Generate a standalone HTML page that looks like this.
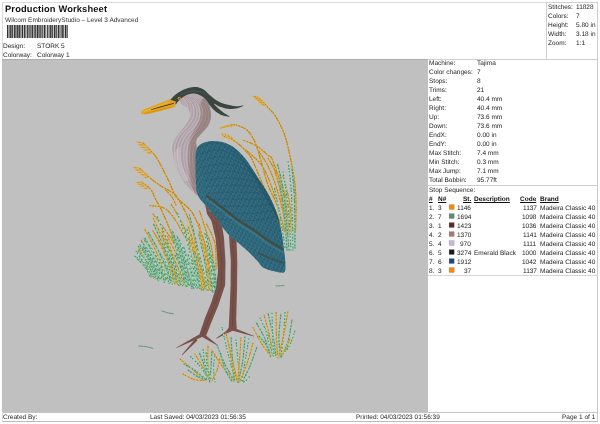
<!DOCTYPE html>
<html>
<head>
<meta charset="utf-8">
<title>Production Worksheet</title>
<style>
html,body{margin:0;padding:0;background:#fff;}
body{text-rendering:geometricPrecision;width:600px;height:424px;position:relative;overflow:hidden;font-family:"Liberation Sans",sans-serif;color:#222;font-size:6.5px;}
.abs{will-change:transform;position:absolute;white-space:nowrap;line-height:1;}
#frame{position:absolute;left:2px;top:2px;width:596px;height:420px;border:1px solid #dcdcdc;border-bottom-color:#bcbcbc;border-right-color:#cacaca;box-sizing:border-box;}
#title{left:4.6px;top:5px;font-size:9.3px;letter-spacing:0.16px;font-weight:bold;color:#111;}
#sub{left:4.6px;top:18px;font-size:6.5px;color:#333;}
#canvas{position:absolute;left:2px;top:59px;width:426px;height:353px;background:#c0c0c0;border-top:1px solid #adadad;box-sizing:border-box;overflow:hidden;}
#stats{position:absolute;left:546px;top:2px;width:52px;height:58px;border:1px solid #cfcfcf;box-sizing:border-box;}
.hl{position:absolute;height:1px;background:#cfcfcf;}
.t{will-change:transform;position:absolute;white-space:nowrap;line-height:8px;height:8px;font-size:6.5px;color:#222;}
.r{text-align:right;}
.b{font-weight:bold;text-decoration:underline;color:#111;}
.sw{position:absolute;width:5px;height:5px;box-sizing:border-box;}
.f{font-size:6.5px;color:#262626;}
#barcode{position:absolute;left:7.3px;top:25px;width:60.7px;height:13px;}

</style>
</head>
<body>
<div id="frame"></div>
<div id="title" class="abs">Production Worksheet</div>
<div id="sub" class="abs">Wilcom EmbroideryStudio – Level 3 Advanced</div>
<svg id="barcode" viewBox="0 0 60.7 13" preserveAspectRatio="none" fill="#303030"><rect x="0.00" y="0" width="1.20" height="13"/><rect x="1.70" y="0" width="0.90" height="13"/><rect x="3.15" y="0" width="1.50" height="13"/><rect x="5.15" y="0" width="0.90" height="13"/><rect x="6.75" y="0" width="1.20" height="13"/><rect x="8.35" y="0" width="1.20" height="13"/><rect x="10.10" y="0" width="1.50" height="13"/><rect x="12.00" y="0" width="0.90" height="13"/><rect x="13.45" y="0" width="0.90" height="13"/><rect x="14.85" y="0" width="1.20" height="13"/><rect x="16.75" y="0" width="1.20" height="13"/><rect x="18.45" y="0" width="0.90" height="13"/><rect x="20.05" y="0" width="0.90" height="13"/><rect x="21.45" y="0" width="1.20" height="13"/><rect x="23.35" y="0" width="1.20" height="13"/><rect x="25.05" y="0" width="1.20" height="13"/><rect x="26.80" y="0" width="0.90" height="13"/><rect x="28.20" y="0" width="0.90" height="13"/><rect x="29.65" y="0" width="1.50" height="13"/><rect x="31.50" y="0" width="1.20" height="13"/><rect x="33.25" y="0" width="1.20" height="13"/><rect x="34.85" y="0" width="0.90" height="13"/><rect x="36.65" y="0" width="1.50" height="13"/><rect x="38.55" y="0" width="0.70" height="13"/><rect x="40.15" y="0" width="1.20" height="13"/><rect x="41.85" y="0" width="0.70" height="13"/><rect x="43.10" y="0" width="1.50" height="13"/><rect x="44.95" y="0" width="0.90" height="13"/><rect x="46.75" y="0" width="1.50" height="13"/><rect x="48.60" y="0" width="1.20" height="13"/><rect x="50.70" y="0" width="1.50" height="13"/><rect x="52.60" y="0" width="0.90" height="13"/><rect x="54.40" y="0" width="1.50" height="13"/><rect x="56.30" y="0" width="0.90" height="13"/><rect x="57.90" y="0" width="1.50" height="13"/><rect x="59.75" y="0" width="0.95" height="13"/></svg>
<div id="canvas"><svg style="position:absolute;left:0;top:-1px" width="426" height="353" viewBox="2 59 426 353">
<path d="M142.5 142.5C143.4 143.4 145.8 145.7 148.0 148.0C150.2 150.3 153.4 153.3 155.7 156.5C158.0 159.7 159.5 162.9 161.8 167.2C164.1 171.5 167.2 177.7 169.5 182.5C171.8 187.3 173.0 192.6 175.6 196.3C178.2 200.1 182.2 202.2 185.0 205.0C187.8 207.8 190.2 209.3 192.5 213.0C194.8 216.7 196.7 220.8 199.0 227.0C201.3 233.2 204.6 241.2 206.6 250.0C208.6 258.8 210.3 275.0 211.0 280.0" fill="none" stroke="#e6ae38" stroke-width="1.3" stroke-linecap="round" />
<path d="M142.5 142.5C143.4 143.4 145.8 145.7 148.0 148.0C150.2 150.3 153.4 153.3 155.7 156.5C158.0 159.7 159.5 162.9 161.8 167.2C164.1 171.5 167.2 177.7 169.5 182.5C171.8 187.3 173.0 192.6 175.6 196.3C178.2 200.1 182.2 202.2 185.0 205.0C187.8 207.8 190.2 209.3 192.5 213.0C194.8 216.7 196.7 220.8 199.0 227.0C201.3 233.2 204.6 241.2 206.6 250.0C208.6 258.8 210.3 275.0 211.0 280.0" fill="none" stroke="#b8821e" stroke-width="1.1700000000000002" stroke-linecap="round" stroke-dasharray="0.8 1.9 1.3 1.5 0.6 2.5" stroke-dashoffset="1.6"/>
<path d="M142.9 142.9L136.8 142.2" fill="none" stroke="#e6ae38" stroke-width="1.25" stroke-linecap="round" />
<path d="M140.2 142.6L138.3 142.4" fill="none" stroke="#b8821e" stroke-width="0.9" stroke-linecap="round" opacity="0.7"/>
<path d="M145.5 145.5L138.4 144.6" fill="none" stroke="#e6ae38" stroke-width="1.25" stroke-linecap="round" />
<path d="M142.3 145.1L140.2 144.8" fill="none" stroke="#b8821e" stroke-width="0.9" stroke-linecap="round" opacity="0.7"/>
<path d="M148.0 148.0L140.6 147.1" fill="none" stroke="#e6ae38" stroke-width="1.25" stroke-linecap="round" />
<path d="M144.7 147.6L142.4 147.3" fill="none" stroke="#b8821e" stroke-width="0.9" stroke-linecap="round" opacity="0.7"/>
<path d="M150.4 150.7L143.3 149.8" fill="none" stroke="#e6ae38" stroke-width="1.25" stroke-linecap="round" />
<path d="M147.2 150.3L145.1 150.0" fill="none" stroke="#b8821e" stroke-width="0.9" stroke-linecap="round" opacity="0.7"/>
<path d="M152.8 153.4L146.7 152.6" fill="none" stroke="#e6ae38" stroke-width="1.25" stroke-linecap="round" />
<path d="M150.1 153.0L148.2 152.8" fill="none" stroke="#b8821e" stroke-width="0.9" stroke-linecap="round" opacity="0.7"/>
<path d="M138.5 167.5C139.3 168.2 141.3 169.9 143.4 171.8C145.5 173.7 148.2 176.4 151.0 178.7C153.8 181.0 157.0 183.4 160.3 185.6C163.6 187.8 167.9 189.4 171.0 191.7C174.1 194.0 175.4 193.8 178.7 199.4C182.0 205.0 187.9 216.6 191.0 225.0C194.1 233.4 195.0 240.5 197.0 250.0C199.0 259.5 202.0 276.7 203.0 282.0" fill="none" stroke="#e6ae38" stroke-width="1.3" stroke-linecap="round" />
<path d="M138.5 167.5C139.3 168.2 141.3 169.9 143.4 171.8C145.5 173.7 148.2 176.4 151.0 178.7C153.8 181.0 157.0 183.4 160.3 185.6C163.6 187.8 167.9 189.4 171.0 191.7C174.1 194.0 175.4 193.8 178.7 199.4C182.0 205.0 187.9 216.6 191.0 225.0C194.1 233.4 195.0 240.5 197.0 250.0C199.0 259.5 202.0 276.7 203.0 282.0" fill="none" stroke="#b8821e" stroke-width="1.1700000000000002" stroke-linecap="round" stroke-dasharray="0.8 1.9 1.3 1.5 0.6 2.5" stroke-dashoffset="0.8"/>
<path d="M139.0 167.9L133.2 167.6" fill="none" stroke="#e6ae38" stroke-width="1.25" stroke-linecap="round" />
<path d="M136.3 167.8L134.6 167.7" fill="none" stroke="#b8821e" stroke-width="0.9" stroke-linecap="round" opacity="0.7"/>
<path d="M141.7 170.3L135.0 169.9" fill="none" stroke="#e6ae38" stroke-width="1.25" stroke-linecap="round" />
<path d="M138.7 170.1L136.7 170.0" fill="none" stroke="#b8821e" stroke-width="0.9" stroke-linecap="round" opacity="0.7"/>
<path d="M144.3 172.7L137.4 172.3" fill="none" stroke="#e6ae38" stroke-width="1.25" stroke-linecap="round" />
<path d="M141.2 172.5L139.1 172.4" fill="none" stroke="#b8821e" stroke-width="0.9" stroke-linecap="round" opacity="0.7"/>
<path d="M147.0 175.1L140.4 174.7" fill="none" stroke="#e6ae38" stroke-width="1.25" stroke-linecap="round" />
<path d="M144.0 174.9L142.0 174.8" fill="none" stroke="#b8821e" stroke-width="0.9" stroke-linecap="round" opacity="0.7"/>
<path d="M149.7 177.5L143.9 177.2" fill="none" stroke="#e6ae38" stroke-width="1.25" stroke-linecap="round" />
<path d="M147.1 177.4L145.3 177.3" fill="none" stroke="#b8821e" stroke-width="0.9" stroke-linecap="round" opacity="0.7"/>
<path d="M141.0 182.0C141.9 182.6 144.7 184.1 146.5 185.6C148.3 187.1 150.3 188.7 151.8 191.0C153.3 193.3 154.3 196.7 155.7 199.4C157.1 202.1 157.9 202.7 160.0 207.0C162.1 211.3 165.0 217.8 168.0 225.0C171.0 232.2 174.7 240.8 178.0 250.0C181.3 259.2 186.3 275.0 188.0 280.0" fill="none" stroke="#e6ae38" stroke-width="1.3" stroke-linecap="round" />
<path d="M141.0 182.0C141.9 182.6 144.7 184.1 146.5 185.6C148.3 187.1 150.3 188.7 151.8 191.0C153.3 193.3 154.3 196.7 155.7 199.4C157.1 202.1 157.9 202.7 160.0 207.0C162.1 211.3 165.0 217.8 168.0 225.0C171.0 232.2 174.7 240.8 178.0 250.0C181.3 259.2 186.3 275.0 188.0 280.0" fill="none" stroke="#b8821e" stroke-width="1.1700000000000002" stroke-linecap="round" stroke-dasharray="0.8 1.9 1.3 1.5 0.6 2.5" stroke-dashoffset="3.3"/>
<path d="M141.5 182.3L136.0 182.6" fill="none" stroke="#e6ae38" stroke-width="1.25" stroke-linecap="round" />
<path d="M139.0 182.5L137.4 182.5" fill="none" stroke="#b8821e" stroke-width="0.9" stroke-linecap="round" opacity="0.7"/>
<path d="M144.2 184.1L137.8 184.4" fill="none" stroke="#e6ae38" stroke-width="1.25" stroke-linecap="round" />
<path d="M141.3 184.2L139.4 184.3" fill="none" stroke="#b8821e" stroke-width="0.9" stroke-linecap="round" opacity="0.7"/>
<path d="M146.8 185.9L140.4 186.2" fill="none" stroke="#e6ae38" stroke-width="1.25" stroke-linecap="round" />
<path d="M143.9 186.0L142.0 186.1" fill="none" stroke="#b8821e" stroke-width="0.9" stroke-linecap="round" opacity="0.7"/>
<path d="M149.0 188.2L143.6 188.5" fill="none" stroke="#e6ae38" stroke-width="1.25" stroke-linecap="round" />
<path d="M146.6 188.3L144.9 188.4" fill="none" stroke="#b8821e" stroke-width="0.9" stroke-linecap="round" opacity="0.7"/>
<path d="M150.0 205.6C152.3 206.0 160.0 205.9 164.0 208.0C168.0 210.1 170.5 213.2 174.0 218.0C177.5 222.8 181.9 231.7 185.0 237.0C188.1 242.3 190.0 242.2 192.5 250.0C195.0 257.8 198.8 278.3 200.0 284.0" fill="none" stroke="#e6ae38" stroke-width="1.2" stroke-linecap="round" />
<path d="M150.0 205.6C152.3 206.0 160.0 205.9 164.0 208.0C168.0 210.1 170.5 213.2 174.0 218.0C177.5 222.8 181.9 231.7 185.0 237.0C188.1 242.3 190.0 242.2 192.5 250.0C195.0 257.8 198.8 278.3 200.0 284.0" fill="none" stroke="#b8821e" stroke-width="1.08" stroke-linecap="round" stroke-dasharray="0.8 1.9 1.3 1.5 0.6 2.5" stroke-dashoffset="0.4"/>
<path d="M153.0 214.0C155.5 217.3 164.0 228.0 168.0 234.0C172.0 240.0 174.0 242.3 177.0 250.0C180.0 257.7 184.5 275.0 186.0 280.0" fill="none" stroke="#e6ae38" stroke-width="1.2" stroke-linecap="round" />
<path d="M153.0 214.0C155.5 217.3 164.0 228.0 168.0 234.0C172.0 240.0 174.0 242.3 177.0 250.0C180.0 257.7 184.5 275.0 186.0 280.0" fill="none" stroke="#b8821e" stroke-width="1.08" stroke-linecap="round" stroke-dasharray="0.8 1.9 1.3 1.5 0.6 2.5" stroke-dashoffset="2.7"/>
<path d="M171.0 204.0C173.2 207.8 180.8 219.3 184.0 227.0C187.2 234.7 187.7 240.5 190.0 250.0C192.3 259.5 196.7 278.3 198.0 284.0" fill="none" stroke="#e6ae38" stroke-width="1.2" stroke-linecap="round" />
<path d="M171.0 204.0C173.2 207.8 180.8 219.3 184.0 227.0C187.2 234.7 187.7 240.5 190.0 250.0C192.3 259.5 196.7 278.3 198.0 284.0" fill="none" stroke="#b8821e" stroke-width="1.08" stroke-linecap="round" stroke-dasharray="0.8 1.9 1.3 1.5 0.6 2.5" stroke-dashoffset="1.8"/>
<path d="M199.6 211.0C200.8 214.6 204.5 226.0 206.6 232.5C208.7 239.0 210.6 241.4 212.0 250.0C213.4 258.6 214.5 278.3 215.0 284.0" fill="none" stroke="#e6ae38" stroke-width="1.2" stroke-linecap="round" />
<path d="M199.6 211.0C200.8 214.6 204.5 226.0 206.6 232.5C208.7 239.0 210.6 241.4 212.0 250.0C213.4 258.6 214.5 278.3 215.0 284.0" fill="none" stroke="#b8821e" stroke-width="1.08" stroke-linecap="round" stroke-dasharray="0.8 1.9 1.3 1.5 0.6 2.5" stroke-dashoffset="0.3"/>
<path d="M206.6 224.0C208.0 227.3 213.4 236.3 215.0 244.0C216.6 251.7 215.8 265.7 216.0 270.0" fill="none" stroke="#e6ae38" stroke-width="1.2" stroke-linecap="round" />
<path d="M206.6 224.0C208.0 227.3 213.4 236.3 215.0 244.0C216.6 251.7 215.8 265.7 216.0 270.0" fill="none" stroke="#b8821e" stroke-width="1.08" stroke-linecap="round" stroke-dasharray="0.8 1.9 1.3 1.5 0.6 2.5" stroke-dashoffset="2.5"/>
<path d="M153.0 231.0C154.8 234.2 160.5 242.0 164.0 250.0C167.5 258.0 172.3 274.2 174.0 279.0" fill="none" stroke="#e6ae38" stroke-width="1.2" stroke-linecap="round" />
<path d="M153.0 231.0C154.8 234.2 160.5 242.0 164.0 250.0C167.5 258.0 172.3 274.2 174.0 279.0" fill="none" stroke="#b8821e" stroke-width="1.08" stroke-linecap="round" stroke-dasharray="0.8 1.9 1.3 1.5 0.6 2.5" stroke-dashoffset="0.2"/>
<path d="M165.6 190.0C166.7 191.2 170.3 194.5 172.0 197.0C173.7 199.5 175.3 203.7 176.0 205.0" fill="none" stroke="#e6ae38" stroke-width="1.2" stroke-linecap="round" />
<path d="M165.6 190.0C166.7 191.2 170.3 194.5 172.0 197.0C173.7 199.5 175.3 203.7 176.0 205.0" fill="none" stroke="#b8821e" stroke-width="1.08" stroke-linecap="round" stroke-dasharray="0.8 1.9 1.3 1.5 0.6 2.5" stroke-dashoffset="2.2"/>
<path d="M257.5 97.0C258.4 97.8 261.2 100.2 263.0 102.0C264.8 103.8 265.8 105.0 268.0 107.5C270.2 110.0 273.2 112.2 276.0 117.0C278.8 121.8 282.5 128.7 285.0 136.0C287.5 143.3 289.3 152.8 291.0 161.0C292.7 169.2 294.2 177.7 295.0 185.0C295.8 192.3 295.9 197.3 296.0 205.0C296.1 212.7 295.6 226.7 295.5 231.0" fill="none" stroke="#e6ae38" stroke-width="1.3" stroke-linecap="round" />
<path d="M257.5 97.0C258.4 97.8 261.2 100.2 263.0 102.0C264.8 103.8 265.8 105.0 268.0 107.5C270.2 110.0 273.2 112.2 276.0 117.0C278.8 121.8 282.5 128.7 285.0 136.0C287.5 143.3 289.3 152.8 291.0 161.0C292.7 169.2 294.2 177.7 295.0 185.0C295.8 192.3 295.9 197.3 296.0 205.0C296.1 212.7 295.6 226.7 295.5 231.0" fill="none" stroke="#b8821e" stroke-width="1.1700000000000002" stroke-linecap="round" stroke-dasharray="0.8 1.9 1.3 1.5 0.6 2.5" stroke-dashoffset="0.3"/>
<path d="M257.9 97.4L252.7 96.1" fill="none" stroke="#e6ae38" stroke-width="1.25" stroke-linecap="round" />
<path d="M255.6 96.8L254.0 96.4" fill="none" stroke="#b8821e" stroke-width="0.9" stroke-linecap="round" opacity="0.7"/>
<path d="M260.2 99.4L254.2 97.9" fill="none" stroke="#e6ae38" stroke-width="1.25" stroke-linecap="round" />
<path d="M257.5 98.7L255.7 98.3" fill="none" stroke="#b8821e" stroke-width="0.9" stroke-linecap="round" opacity="0.7"/>
<path d="M262.4 101.4L256.1 99.9" fill="none" stroke="#e6ae38" stroke-width="1.25" stroke-linecap="round" />
<path d="M259.5 100.7L257.7 100.3" fill="none" stroke="#b8821e" stroke-width="0.9" stroke-linecap="round" opacity="0.7"/>
<path d="M264.5 103.6L258.5 102.1" fill="none" stroke="#e6ae38" stroke-width="1.25" stroke-linecap="round" />
<path d="M261.8 102.9L260.0 102.5" fill="none" stroke="#b8821e" stroke-width="0.9" stroke-linecap="round" opacity="0.7"/>
<path d="M266.5 105.8L261.3 104.5" fill="none" stroke="#e6ae38" stroke-width="1.25" stroke-linecap="round" />
<path d="M264.1 105.2L262.6 104.8" fill="none" stroke="#b8821e" stroke-width="0.9" stroke-linecap="round" opacity="0.7"/>
<path d="M223.0 127.2C224.2 126.9 227.8 125.7 230.0 125.3C232.2 124.9 233.4 124.2 236.2 125.0C239.0 125.8 244.0 127.7 246.8 129.9C249.6 132.1 251.4 135.2 253.2 138.4C255.0 141.6 256.3 145.5 257.5 149.0C258.7 152.5 258.9 153.6 260.6 159.6C262.4 165.6 265.3 177.4 268.0 185.0C270.7 192.6 274.2 197.2 277.0 205.0C279.8 212.8 283.7 227.5 285.0 232.0" fill="none" stroke="#e6ae38" stroke-width="1.3" stroke-linecap="round" />
<path d="M223.0 127.2C224.2 126.9 227.8 125.7 230.0 125.3C232.2 124.9 233.4 124.2 236.2 125.0C239.0 125.8 244.0 127.7 246.8 129.9C249.6 132.1 251.4 135.2 253.2 138.4C255.0 141.6 256.3 145.5 257.5 149.0C258.7 152.5 258.9 153.6 260.6 159.6C262.4 165.6 265.3 177.4 268.0 185.0C270.7 192.6 274.2 197.2 277.0 205.0C279.8 212.8 283.7 227.5 285.0 232.0" fill="none" stroke="#b8821e" stroke-width="1.1700000000000002" stroke-linecap="round" stroke-dasharray="0.8 1.9 1.3 1.5 0.6 2.5" stroke-dashoffset="0.5"/>
<path d="M223.6 127.0L220.0 128.3" fill="none" stroke="#e6ae38" stroke-width="1.25" stroke-linecap="round" />
<path d="M222.0 127.6L220.9 128.0" fill="none" stroke="#b8821e" stroke-width="0.9" stroke-linecap="round" opacity="0.7"/>
<path d="M226.9 126.2L222.7 127.6" fill="none" stroke="#e6ae38" stroke-width="1.25" stroke-linecap="round" />
<path d="M225.0 126.8L223.7 127.2" fill="none" stroke="#b8821e" stroke-width="0.9" stroke-linecap="round" opacity="0.7"/>
<path d="M230.1 125.3L226.0 126.8" fill="none" stroke="#e6ae38" stroke-width="1.25" stroke-linecap="round" />
<path d="M228.3 125.9L227.0 126.4" fill="none" stroke="#b8821e" stroke-width="0.9" stroke-linecap="round" opacity="0.7"/>
<path d="M233.5 125.1L230.0 126.4" fill="none" stroke="#e6ae38" stroke-width="1.25" stroke-linecap="round" />
<path d="M231.9 125.7L230.8 126.1" fill="none" stroke="#b8821e" stroke-width="0.9" stroke-linecap="round" opacity="0.7"/>
<path d="M223.0 136.2C224.3 136.6 228.3 137.5 231.0 138.9C233.7 140.3 236.8 142.5 239.4 144.7C242.0 146.9 244.7 149.7 246.8 152.2C248.9 154.7 249.5 154.1 252.2 159.6C254.9 165.1 259.5 177.4 263.0 185.0C266.5 192.6 269.7 197.5 273.0 205.0C276.3 212.5 281.3 225.8 283.0 230.0" fill="none" stroke="#e6ae38" stroke-width="1.3" stroke-linecap="round" />
<path d="M223.0 136.2C224.3 136.6 228.3 137.5 231.0 138.9C233.7 140.3 236.8 142.5 239.4 144.7C242.0 146.9 244.7 149.7 246.8 152.2C248.9 154.7 249.5 154.1 252.2 159.6C254.9 165.1 259.5 177.4 263.0 185.0C266.5 192.6 269.7 197.5 273.0 205.0C276.3 212.5 281.3 225.8 283.0 230.0" fill="none" stroke="#b8821e" stroke-width="1.1700000000000002" stroke-linecap="round" stroke-dasharray="0.8 1.9 1.3 1.5 0.6 2.5" stroke-dashoffset="2.1"/>
<path d="M223.6 136.4L221.9 133.0" fill="none" stroke="#e6ae38" stroke-width="1.25" stroke-linecap="round" />
<path d="M222.8 134.9L222.3 133.8" fill="none" stroke="#b8821e" stroke-width="0.9" stroke-linecap="round" opacity="0.7"/>
<path d="M226.8 137.5L224.8 133.5" fill="none" stroke="#e6ae38" stroke-width="1.25" stroke-linecap="round" />
<path d="M225.9 135.7L225.3 134.5" fill="none" stroke="#b8821e" stroke-width="0.9" stroke-linecap="round" opacity="0.7"/>
<path d="M230.0 138.6L228.0 134.6" fill="none" stroke="#e6ae38" stroke-width="1.25" stroke-linecap="round" />
<path d="M229.1 136.8L228.5 135.6" fill="none" stroke="#b8821e" stroke-width="0.9" stroke-linecap="round" opacity="0.7"/>
<path d="M232.9 140.2L231.2 136.8" fill="none" stroke="#e6ae38" stroke-width="1.25" stroke-linecap="round" />
<path d="M232.2 138.7L231.7 137.7" fill="none" stroke="#b8821e" stroke-width="0.9" stroke-linecap="round" opacity="0.7"/>
<path d="M242.6 140.0C244.2 140.6 249.4 142.4 252.2 143.7C255.0 145.0 257.0 146.0 259.6 147.9C262.2 149.8 265.9 153.4 268.0 155.3C270.1 157.2 270.1 154.7 272.3 159.6C274.5 164.5 278.6 176.6 281.0 185.0C283.4 193.4 285.7 202.2 287.0 210.0C288.3 217.8 288.7 228.3 289.0 232.0" fill="none" stroke="#e6ae38" stroke-width="1.2" stroke-linecap="round" />
<path d="M242.6 140.0C244.2 140.6 249.4 142.4 252.2 143.7C255.0 145.0 257.0 146.0 259.6 147.9C262.2 149.8 265.9 153.4 268.0 155.3C270.1 157.2 270.1 154.7 272.3 159.6C274.5 164.5 278.6 176.6 281.0 185.0C283.4 193.4 285.7 202.2 287.0 210.0C288.3 217.8 288.7 228.3 289.0 232.0" fill="none" stroke="#b8821e" stroke-width="1.08" stroke-linecap="round" stroke-dasharray="0.8 1.9 1.3 1.5 0.6 2.5" stroke-dashoffset="4.1"/>
<path d="M246.0 150.0C248.6 152.5 257.3 159.2 261.5 165.0C265.7 170.8 268.1 177.5 271.0 185.0C273.9 192.5 277.0 202.2 279.0 210.0C281.0 217.8 282.3 228.3 283.0 232.0" fill="none" stroke="#e6ae38" stroke-width="1.2" stroke-linecap="round" />
<path d="M246.0 150.0C248.6 152.5 257.3 159.2 261.5 165.0C265.7 170.8 268.1 177.5 271.0 185.0C273.9 192.5 277.0 202.2 279.0 210.0C281.0 217.8 282.3 228.3 283.0 232.0" fill="none" stroke="#b8821e" stroke-width="1.08" stroke-linecap="round" stroke-dasharray="0.8 1.9 1.3 1.5 0.6 2.5" stroke-dashoffset="0.6"/>
<path d="M258.0 150.0C259.7 152.7 265.0 160.0 268.0 166.0C271.0 172.0 273.5 178.3 276.0 186.0C278.5 193.7 281.2 204.2 283.0 212.0C284.8 219.8 286.3 229.5 287.0 233.0" fill="none" stroke="#e6ae38" stroke-width="1.2" stroke-linecap="round" />
<path d="M258.0 150.0C259.7 152.7 265.0 160.0 268.0 166.0C271.0 172.0 273.5 178.3 276.0 186.0C278.5 193.7 281.2 204.2 283.0 212.0C284.8 219.8 286.3 229.5 287.0 233.0" fill="none" stroke="#b8821e" stroke-width="1.08" stroke-linecap="round" stroke-dasharray="0.8 1.9 1.3 1.5 0.6 2.5" stroke-dashoffset="1.1"/>
<path d="M272.7 165.0C273.9 169.2 277.8 178.8 280.0 190.0C282.2 201.2 285.0 225.0 286.0 232.0" fill="none" stroke="#e6ae38" stroke-width="1.2" stroke-linecap="round" />
<path d="M272.7 165.0C273.9 169.2 277.8 178.8 280.0 190.0C282.2 201.2 285.0 225.0 286.0 232.0" fill="none" stroke="#b8821e" stroke-width="1.08" stroke-linecap="round" stroke-dasharray="0.8 1.9 1.3 1.5 0.6 2.5" stroke-dashoffset="3.1"/>
<path d="M268.0 158.0C270.0 161.7 276.7 172.2 280.0 180.0C283.3 187.8 286.2 196.3 288.0 205.0C289.8 213.7 290.5 227.5 291.0 232.0" fill="none" stroke="#e6ae38" stroke-width="1.2" stroke-linecap="round" />
<path d="M268.0 158.0C270.0 161.7 276.7 172.2 280.0 180.0C283.3 187.8 286.2 196.3 288.0 205.0C289.8 213.7 290.5 227.5 291.0 232.0" fill="none" stroke="#b8821e" stroke-width="1.08" stroke-linecap="round" stroke-dasharray="0.8 1.9 1.3 1.5 0.6 2.5" stroke-dashoffset="4.7"/>
<path d="M283.0 176.0C284.0 180.0 287.3 190.7 289.0 200.0C290.7 209.3 292.3 226.7 293.0 232.0" fill="none" stroke="#e6ae38" stroke-width="1.2" stroke-linecap="round" />
<path d="M283.0 176.0C284.0 180.0 287.3 190.7 289.0 200.0C290.7 209.3 292.3 226.7 293.0 232.0" fill="none" stroke="#b8821e" stroke-width="1.08" stroke-linecap="round" stroke-dasharray="0.8 1.9 1.3 1.5 0.6 2.5" stroke-dashoffset="2.9"/>
<path d="M277.5 164.0C278.6 169.2 282.1 180.7 284.0 195.0C285.9 209.3 288.2 240.8 289.0 250.0" fill="none" stroke="#92c6a6" stroke-width="1.4" stroke-linecap="round" />
<path d="M277.5 164.0C278.6 169.2 282.1 180.7 284.0 195.0C285.9 209.3 288.2 240.8 289.0 250.0" fill="none" stroke="#4f9070" stroke-width="1.26" stroke-linecap="round" stroke-dasharray="0.7 2.4 1.1 1.9 0.6 3.1" stroke-dashoffset="2.0"/>
<path d="M288.0 160.6C288.6 166.3 290.7 180.1 291.5 195.0C292.3 209.9 292.8 240.8 293.0 250.0" fill="none" stroke="#acdcc0" stroke-width="1.4" stroke-linecap="round" />
<path d="M288.0 160.6C288.6 166.3 290.7 180.1 291.5 195.0C292.3 209.9 292.8 240.8 293.0 250.0" fill="none" stroke="#4f9070" stroke-width="1.26" stroke-linecap="round" stroke-dasharray="0.7 2.4 1.1 1.9 0.6 3.1" stroke-dashoffset="4.9"/>
<path d="M283.0 172.0C283.8 177.5 286.7 192.0 288.0 205.0C289.3 218.0 290.5 242.5 291.0 250.0" fill="none" stroke="#acdcc0" stroke-width="1.4" stroke-linecap="round" />
<path d="M283.0 172.0C283.8 177.5 286.7 192.0 288.0 205.0C289.3 218.0 290.5 242.5 291.0 250.0" fill="none" stroke="#4f9070" stroke-width="1.26" stroke-linecap="round" stroke-dasharray="0.7 2.4 1.1 1.9 0.6 3.1" stroke-dashoffset="0.2"/>
<path d="M279.0 180.0C279.8 185.0 282.7 198.3 284.0 210.0C285.3 221.7 286.5 243.3 287.0 250.0" fill="none" stroke="#92c6a6" stroke-width="1.4" stroke-linecap="round" />
<path d="M279.0 180.0C279.8 185.0 282.7 198.3 284.0 210.0C285.3 221.7 286.5 243.3 287.0 250.0" fill="none" stroke="#4f9070" stroke-width="1.26" stroke-linecap="round" stroke-dasharray="0.7 2.4 1.1 1.9 0.6 3.1" stroke-dashoffset="4.3"/>
<path d="M292.0 168.0C292.4 173.3 294.0 186.7 294.5 200.0C295.0 213.3 294.9 240.0 295.0 248.0" fill="none" stroke="#92c6a6" stroke-width="1.4" stroke-linecap="round" />
<path d="M292.0 168.0C292.4 173.3 294.0 186.7 294.5 200.0C295.0 213.3 294.9 240.0 295.0 248.0" fill="none" stroke="#4f9070" stroke-width="1.26" stroke-linecap="round" stroke-dasharray="0.7 2.4 1.1 1.9 0.6 3.1" stroke-dashoffset="1.4"/>
<path d="M274.0 186.0C275.0 190.8 278.2 204.7 280.0 215.0C281.8 225.3 284.2 242.5 285.0 248.0" fill="none" stroke="#acdcc0" stroke-width="1.4" stroke-linecap="round" />
<path d="M274.0 186.0C275.0 190.8 278.2 204.7 280.0 215.0C281.8 225.3 284.2 242.5 285.0 248.0" fill="none" stroke="#4f9070" stroke-width="1.26" stroke-linecap="round" stroke-dasharray="0.7 2.4 1.1 1.9 0.6 3.1" stroke-dashoffset="0.7"/>
<path d="M167.5 236.4C169.4 240.4 175.6 252.4 178.9 260.5C182.3 268.6 186.2 281.0 187.7 285.0" fill="none" stroke="#e6ae38" stroke-width="1.15" stroke-linecap="round" />
<path d="M167.5 236.4C169.4 240.4 175.6 252.4 178.9 260.5C182.3 268.6 186.2 281.0 187.7 285.0" fill="none" stroke="#b8821e" stroke-width="1.035" stroke-linecap="round" stroke-dasharray="0.9 3.0 1.4 2.4 0.7 3.9" stroke-dashoffset="4.5"/>
<path d="M160.3 259.6C161.5 261.5 165.5 266.9 167.3 270.8C169.0 274.6 170.2 280.7 170.8 282.7" fill="none" stroke="#acdcc0" stroke-width="1.35" stroke-linecap="round" />
<path d="M160.3 259.6C161.5 261.5 165.5 266.9 167.3 270.8C169.0 274.6 170.2 280.7 170.8 282.7" fill="none" stroke="#4f9070" stroke-width="1.215" stroke-linecap="round" stroke-dasharray="0.9 3.0 1.4 2.4 0.7 3.9" stroke-dashoffset="4.4"/>
<path d="M185.5 231.4C187.2 236.2 192.6 250.6 195.6 260.4C198.5 270.3 201.9 285.4 203.2 290.4" fill="none" stroke="#acdcc0" stroke-width="1.35" stroke-linecap="round" />
<path d="M185.5 231.4C187.2 236.2 192.6 250.6 195.6 260.4C198.5 270.3 201.9 285.4 203.2 290.4" fill="none" stroke="#4f9070" stroke-width="1.215" stroke-linecap="round" stroke-dasharray="0.9 3.0 1.4 2.4 0.7 3.9" stroke-dashoffset="4.5"/>
<path d="M143.9 249.0C145.7 251.5 151.3 258.9 154.6 264.1C157.9 269.4 162.1 277.8 163.6 280.5" fill="none" stroke="#92c6a6" stroke-width="1.35" stroke-linecap="round" />
<path d="M143.9 249.0C145.7 251.5 151.3 258.9 154.6 264.1C157.9 269.4 162.1 277.8 163.6 280.5" fill="none" stroke="#4f9070" stroke-width="1.215" stroke-linecap="round" stroke-dasharray="0.9 3.0 1.4 2.4 0.7 3.9" stroke-dashoffset="2.3"/>
<path d="M171.7 229.3C173.6 234.1 179.7 248.5 183.2 258.1C186.7 267.8 191.2 282.4 192.8 287.2" fill="none" stroke="#92c6a6" stroke-width="1.35" stroke-linecap="round" />
<path d="M171.7 229.3C173.6 234.1 179.7 248.5 183.2 258.1C186.7 267.8 191.2 282.4 192.8 287.2" fill="none" stroke="#4f9070" stroke-width="1.215" stroke-linecap="round" stroke-dasharray="0.9 3.0 1.4 2.4 0.7 3.9" stroke-dashoffset="1.2"/>
<path d="M188.1 225.3C189.4 230.5 193.8 245.8 195.9 256.4C197.9 267.0 199.7 283.4 200.5 288.9" fill="none" stroke="#e6ae38" stroke-width="1.15" stroke-linecap="round" />
<path d="M188.1 225.3C189.4 230.5 193.8 245.8 195.9 256.4C197.9 267.0 199.7 283.4 200.5 288.9" fill="none" stroke="#b8821e" stroke-width="1.035" stroke-linecap="round" stroke-dasharray="0.9 3.0 1.4 2.4 0.7 3.9" stroke-dashoffset="2.1"/>
<path d="M140.5 253.0C141.9 255.0 146.5 260.9 148.7 265.1C150.9 269.2 152.8 275.8 153.6 277.9" fill="none" stroke="#acdcc0" stroke-width="1.35" stroke-linecap="round" />
<path d="M140.5 253.0C141.9 255.0 146.5 260.9 148.7 265.1C150.9 269.2 152.8 275.8 153.6 277.9" fill="none" stroke="#4f9070" stroke-width="1.215" stroke-linecap="round" stroke-dasharray="0.9 3.0 1.4 2.4 0.7 3.9" stroke-dashoffset="4.4"/>
<path d="M156.5 215.0C158.8 220.7 166.4 237.6 170.6 249.2C174.8 260.7 179.8 278.5 181.7 284.3" fill="none" stroke="#acdcc0" stroke-width="1.35" stroke-linecap="round" />
<path d="M156.5 215.0C158.8 220.7 166.4 237.6 170.6 249.2C174.8 260.7 179.8 278.5 181.7 284.3" fill="none" stroke="#4f9070" stroke-width="1.215" stroke-linecap="round" stroke-dasharray="0.9 3.0 1.4 2.4 0.7 3.9" stroke-dashoffset="2.1"/>
<path d="M206.5 235.0C207.5 239.6 210.9 253.0 212.4 262.4C214.0 271.8 215.4 286.6 215.9 291.4" fill="none" stroke="#92c6a6" stroke-width="1.35" stroke-linecap="round" />
<path d="M206.5 235.0C207.5 239.6 210.9 253.0 212.4 262.4C214.0 271.8 215.4 286.6 215.9 291.4" fill="none" stroke="#4f9070" stroke-width="1.215" stroke-linecap="round" stroke-dasharray="0.9 3.0 1.4 2.4 0.7 3.9" stroke-dashoffset="3.9"/>
<path d="M189.4 214.9C191.0 221.1 196.0 239.4 198.6 251.8C201.1 264.1 203.8 282.7 204.8 288.9" fill="none" stroke="#92c6a6" stroke-width="1.35" stroke-linecap="round" />
<path d="M189.4 214.9C191.0 221.1 196.0 239.4 198.6 251.8C201.1 264.1 203.8 282.7 204.8 288.9" fill="none" stroke="#4f9070" stroke-width="1.215" stroke-linecap="round" stroke-dasharray="0.9 3.0 1.4 2.4 0.7 3.9" stroke-dashoffset="0.7"/>
<path d="M143.2 264.8C143.9 265.6 146.3 268.0 147.4 270.0C148.5 271.9 149.6 275.6 150.0 276.7" fill="none" stroke="#e6ae38" stroke-width="1.15" stroke-linecap="round" />
<path d="M143.2 264.8C143.9 265.6 146.3 268.0 147.4 270.0C148.5 271.9 149.6 275.6 150.0 276.7" fill="none" stroke="#b8821e" stroke-width="1.035" stroke-linecap="round" stroke-dasharray="0.9 3.0 1.4 2.4 0.7 3.9" stroke-dashoffset="4.5"/>
<path d="M174.0 260.8C175.1 262.7 178.7 268.1 180.3 272.1C181.9 276.2 183.1 282.9 183.6 285.1" fill="none" stroke="#acdcc0" stroke-width="1.35" stroke-linecap="round" />
<path d="M174.0 260.8C175.1 262.7 178.7 268.1 180.3 272.1C181.9 276.2 183.1 282.9 183.6 285.1" fill="none" stroke="#4f9070" stroke-width="1.215" stroke-linecap="round" stroke-dasharray="0.9 3.0 1.4 2.4 0.7 3.9" stroke-dashoffset="4.1"/>
<path d="M174.3 243.5C175.7 246.8 180.3 256.5 182.8 263.5C185.3 270.5 188.2 281.8 189.3 285.5" fill="none" stroke="#acdcc0" stroke-width="1.35" stroke-linecap="round" />
<path d="M174.3 243.5C175.7 246.8 180.3 256.5 182.8 263.5C185.3 270.5 188.2 281.8 189.3 285.5" fill="none" stroke="#4f9070" stroke-width="1.215" stroke-linecap="round" stroke-dasharray="0.9 3.0 1.4 2.4 0.7 3.9" stroke-dashoffset="0.7"/>
<path d="M161.8 235.2C163.7 239.1 169.9 250.4 173.0 258.6C176.1 266.9 179.1 280.4 180.3 284.7" fill="none" stroke="#92c6a6" stroke-width="1.35" stroke-linecap="round" />
<path d="M161.8 235.2C163.7 239.1 169.9 250.4 173.0 258.6C176.1 266.9 179.1 280.4 180.3 284.7" fill="none" stroke="#4f9070" stroke-width="1.215" stroke-linecap="round" stroke-dasharray="0.9 3.0 1.4 2.4 0.7 3.9" stroke-dashoffset="3.7"/>
<path d="M183.6 246.9C184.6 250.3 187.9 260.4 189.6 267.4C191.4 274.4 193.3 285.5 194.0 289.1" fill="none" stroke="#92c6a6" stroke-width="1.35" stroke-linecap="round" />
<path d="M183.6 246.9C184.6 250.3 187.9 260.4 189.6 267.4C191.4 274.4 193.3 285.5 194.0 289.1" fill="none" stroke="#4f9070" stroke-width="1.215" stroke-linecap="round" stroke-dasharray="0.9 3.0 1.4 2.4 0.7 3.9" stroke-dashoffset="3.1"/>
<path d="M161.7 230.3C163.7 235.0 170.2 249.1 174.1 258.6C178.1 268.0 183.4 282.3 185.2 287.1" fill="none" stroke="#e6ae38" stroke-width="1.15" stroke-linecap="round" />
<path d="M161.7 230.3C163.7 235.0 170.2 249.1 174.1 258.6C178.1 268.0 183.4 282.3 185.2 287.1" fill="none" stroke="#b8821e" stroke-width="1.035" stroke-linecap="round" stroke-dasharray="0.9 3.0 1.4 2.4 0.7 3.9" stroke-dashoffset="2.6"/>
<path d="M139.9 244.7C141.6 247.5 147.1 255.4 150.2 261.4C153.2 267.4 156.9 277.5 158.2 280.8" fill="none" stroke="#acdcc0" stroke-width="1.35" stroke-linecap="round" />
<path d="M139.9 244.7C141.6 247.5 147.1 255.4 150.2 261.4C153.2 267.4 156.9 277.5 158.2 280.8" fill="none" stroke="#4f9070" stroke-width="1.215" stroke-linecap="round" stroke-dasharray="0.9 3.0 1.4 2.4 0.7 3.9" stroke-dashoffset="0.3"/>
<path d="M186.8 228.2C188.2 233.4 192.6 248.8 195.0 259.1C197.5 269.4 200.6 284.9 201.7 290.1" fill="none" stroke="#acdcc0" stroke-width="1.35" stroke-linecap="round" />
<path d="M186.8 228.2C188.2 233.4 192.6 248.8 195.0 259.1C197.5 269.4 200.6 284.9 201.7 290.1" fill="none" stroke="#4f9070" stroke-width="1.215" stroke-linecap="round" stroke-dasharray="0.9 3.0 1.4 2.4 0.7 3.9" stroke-dashoffset="2.9"/>
<path d="M143.1 237.9C145.5 241.6 153.1 252.1 157.4 259.7C161.7 267.2 167.1 279.4 169.0 283.3" fill="none" stroke="#92c6a6" stroke-width="1.35" stroke-linecap="round" />
<path d="M143.1 237.9C145.5 241.6 153.1 252.1 157.4 259.7C161.7 267.2 167.1 279.4 169.0 283.3" fill="none" stroke="#4f9070" stroke-width="1.215" stroke-linecap="round" stroke-dasharray="0.9 3.0 1.4 2.4 0.7 3.9" stroke-dashoffset="0.9"/>
<path d="M198.4 231.9C199.4 236.7 202.7 250.5 204.5 260.2C206.3 270.0 208.2 285.5 209.0 290.5" fill="none" stroke="#92c6a6" stroke-width="1.35" stroke-linecap="round" />
<path d="M198.4 231.9C199.4 236.7 202.7 250.5 204.5 260.2C206.3 270.0 208.2 285.5 209.0 290.5" fill="none" stroke="#4f9070" stroke-width="1.215" stroke-linecap="round" stroke-dasharray="0.9 3.0 1.4 2.4 0.7 3.9" stroke-dashoffset="1.0"/>
<path d="M153.3 218.2C155.7 223.6 163.1 239.2 167.5 250.2C171.9 261.3 177.5 278.9 179.5 284.6" fill="none" stroke="#e6ae38" stroke-width="1.15" stroke-linecap="round" />
<path d="M153.3 218.2C155.7 223.6 163.1 239.2 167.5 250.2C171.9 261.3 177.5 278.9 179.5 284.6" fill="none" stroke="#b8821e" stroke-width="1.035" stroke-linecap="round" stroke-dasharray="0.9 3.0 1.4 2.4 0.7 3.9" stroke-dashoffset="4.6"/>
<path d="M176.8 251.0C177.9 253.9 181.5 262.1 183.2 268.2C185.0 274.3 186.5 284.3 187.2 287.5" fill="none" stroke="#acdcc0" stroke-width="1.35" stroke-linecap="round" />
<path d="M176.8 251.0C177.9 253.9 181.5 262.1 183.2 268.2C185.0 274.3 186.5 284.3 187.2 287.5" fill="none" stroke="#4f9070" stroke-width="1.215" stroke-linecap="round" stroke-dasharray="0.9 3.0 1.4 2.4 0.7 3.9" stroke-dashoffset="0.7"/>
<path d="M193.7 263.6C194.2 265.6 195.9 271.5 196.8 275.5C197.7 279.6 198.5 285.8 198.8 287.9" fill="none" stroke="#acdcc0" stroke-width="1.35" stroke-linecap="round" />
<path d="M193.7 263.6C194.2 265.6 195.9 271.5 196.8 275.5C197.7 279.6 198.5 285.8 198.8 287.9" fill="none" stroke="#4f9070" stroke-width="1.215" stroke-linecap="round" stroke-dasharray="0.9 3.0 1.4 2.4 0.7 3.9" stroke-dashoffset="0.6"/>
<path d="M176.8 235.3C178.2 239.6 182.8 252.2 185.3 261.1C187.9 269.9 190.8 283.9 191.9 288.5" fill="none" stroke="#92c6a6" stroke-width="1.35" stroke-linecap="round" />
<path d="M176.8 235.3C178.2 239.6 182.8 252.2 185.3 261.1C187.9 269.9 190.8 283.9 191.9 288.5" fill="none" stroke="#4f9070" stroke-width="1.215" stroke-linecap="round" stroke-dasharray="0.9 3.0 1.4 2.4 0.7 3.9" stroke-dashoffset="1.8"/>
<path d="M171.8 236.4C173.8 240.4 180.3 251.9 183.6 260.3C186.9 268.7 190.1 282.2 191.4 286.6" fill="none" stroke="#92c6a6" stroke-width="1.35" stroke-linecap="round" />
<path d="M171.8 236.4C173.8 240.4 180.3 251.9 183.6 260.3C186.9 268.7 190.1 282.2 191.4 286.6" fill="none" stroke="#4f9070" stroke-width="1.215" stroke-linecap="round" stroke-dasharray="0.9 3.0 1.4 2.4 0.7 3.9" stroke-dashoffset="3.1"/>
<path d="M189.2 238.4C190.6 242.4 195.1 254.4 197.2 262.7C199.4 271.0 201.4 283.9 202.2 288.1" fill="none" stroke="#e6ae38" stroke-width="1.15" stroke-linecap="round" />
<path d="M189.2 238.4C190.6 242.4 195.1 254.4 197.2 262.7C199.4 271.0 201.4 283.9 202.2 288.1" fill="none" stroke="#b8821e" stroke-width="1.035" stroke-linecap="round" stroke-dasharray="0.9 3.0 1.4 2.4 0.7 3.9" stroke-dashoffset="2.6"/>
<path d="M165.2 251.0C166.5 253.8 171.1 262.2 173.4 268.0C175.7 273.7 178.0 282.6 178.9 285.6" fill="none" stroke="#acdcc0" stroke-width="1.35" stroke-linecap="round" />
<path d="M165.2 251.0C166.5 253.8 171.1 262.2 173.4 268.0C175.7 273.7 178.0 282.6 178.9 285.6" fill="none" stroke="#4f9070" stroke-width="1.215" stroke-linecap="round" stroke-dasharray="0.9 3.0 1.4 2.4 0.7 3.9" stroke-dashoffset="4.4"/>
<path d="M163.8 243.7C165.5 247.1 170.9 256.9 174.0 263.9C177.2 270.9 181.3 282.0 182.7 285.7" fill="none" stroke="#acdcc0" stroke-width="1.35" stroke-linecap="round" />
<path d="M163.8 243.7C165.5 247.1 170.9 256.9 174.0 263.9C177.2 270.9 181.3 282.0 182.7 285.7" fill="none" stroke="#4f9070" stroke-width="1.215" stroke-linecap="round" stroke-dasharray="0.9 3.0 1.4 2.4 0.7 3.9" stroke-dashoffset="3.5"/>
<path d="M138.6 250.9C140.3 253.1 145.7 259.1 148.7 263.9C151.7 268.7 155.3 277.1 156.6 279.8" fill="none" stroke="#92c6a6" stroke-width="1.35" stroke-linecap="round" />
<path d="M138.6 250.9C140.3 253.1 145.7 259.1 148.7 263.9C151.7 268.7 155.3 277.1 156.6 279.8" fill="none" stroke="#4f9070" stroke-width="1.215" stroke-linecap="round" stroke-dasharray="0.9 3.0 1.4 2.4 0.7 3.9" stroke-dashoffset="0.4"/>
<path d="M197.7 253.3C198.7 256.2 202.2 265.1 203.7 271.2C205.3 277.3 206.5 286.9 207.0 290.0" fill="none" stroke="#92c6a6" stroke-width="1.35" stroke-linecap="round" />
<path d="M197.7 253.3C198.7 256.2 202.2 265.1 203.7 271.2C205.3 277.3 206.5 286.9 207.0 290.0" fill="none" stroke="#4f9070" stroke-width="1.215" stroke-linecap="round" stroke-dasharray="0.9 3.0 1.4 2.4 0.7 3.9" stroke-dashoffset="3.7"/>
<path d="M138.5 248.4C139.9 250.7 144.2 257.0 146.8 261.8C149.4 266.7 152.7 275.0 153.9 277.6" fill="none" stroke="#e6ae38" stroke-width="1.15" stroke-linecap="round" />
<path d="M138.5 248.4C139.9 250.7 144.2 257.0 146.8 261.8C149.4 266.7 152.7 275.0 153.9 277.6" fill="none" stroke="#b8821e" stroke-width="1.035" stroke-linecap="round" stroke-dasharray="0.9 3.0 1.4 2.4 0.7 3.9" stroke-dashoffset="2.7"/>
<path d="M162.9 257.4C164.0 259.2 167.2 264.2 169.0 268.3C170.9 272.4 173.0 279.6 173.8 281.8" fill="none" stroke="#acdcc0" stroke-width="1.35" stroke-linecap="round" />
<path d="M162.9 257.4C164.0 259.2 167.2 264.2 169.0 268.3C170.9 272.4 173.0 279.6 173.8 281.8" fill="none" stroke="#4f9070" stroke-width="1.215" stroke-linecap="round" stroke-dasharray="0.9 3.0 1.4 2.4 0.7 3.9" stroke-dashoffset="2.5"/>
<path d="M205.9 266.1C206.5 268.1 208.8 273.9 209.6 277.9C210.4 282.0 210.7 288.3 210.9 290.4" fill="none" stroke="#acdcc0" stroke-width="1.35" stroke-linecap="round" />
<path d="M205.9 266.1C206.5 268.1 208.8 273.9 209.6 277.9C210.4 282.0 210.7 288.3 210.9 290.4" fill="none" stroke="#4f9070" stroke-width="1.215" stroke-linecap="round" stroke-dasharray="0.9 3.0 1.4 2.4 0.7 3.9" stroke-dashoffset="0.1"/>
<path d="M163.6 252.4C164.9 254.7 169.5 261.4 171.7 266.5C173.9 271.6 175.9 280.2 176.7 282.9" fill="none" stroke="#92c6a6" stroke-width="1.35" stroke-linecap="round" />
<path d="M163.6 252.4C164.9 254.7 169.5 261.4 171.7 266.5C173.9 271.6 175.9 280.2 176.7 282.9" fill="none" stroke="#4f9070" stroke-width="1.215" stroke-linecap="round" stroke-dasharray="0.9 3.0 1.4 2.4 0.7 3.9" stroke-dashoffset="0.9"/>
<path d="M175.8 250.8C176.7 253.7 179.8 262.2 181.5 268.0C183.2 273.9 185.3 282.9 186.1 285.8" fill="none" stroke="#92c6a6" stroke-width="1.35" stroke-linecap="round" />
<path d="M175.8 250.8C176.7 253.7 179.8 262.2 181.5 268.0C183.2 273.9 185.3 282.9 186.1 285.8" fill="none" stroke="#4f9070" stroke-width="1.215" stroke-linecap="round" stroke-dasharray="0.9 3.0 1.4 2.4 0.7 3.9" stroke-dashoffset="1.0"/>
<path d="M141.1 240.1C143.1 243.4 149.5 253.2 153.0 259.7C156.6 266.2 160.9 276.1 162.5 279.3" fill="none" stroke="#e6ae38" stroke-width="1.15" stroke-linecap="round" />
<path d="M141.1 240.1C143.1 243.4 149.5 253.2 153.0 259.7C156.6 266.2 160.9 276.1 162.5 279.3" fill="none" stroke="#b8821e" stroke-width="1.035" stroke-linecap="round" stroke-dasharray="0.9 3.0 1.4 2.4 0.7 3.9" stroke-dashoffset="3.4"/>
<path d="M140.5 247.6C142.4 250.1 148.8 257.5 152.2 262.6C155.6 267.8 159.3 276.0 160.7 278.7" fill="none" stroke="#acdcc0" stroke-width="1.35" stroke-linecap="round" />
<path d="M140.5 247.6C142.4 250.1 148.8 257.5 152.2 262.6C155.6 267.8 159.3 276.0 160.7 278.7" fill="none" stroke="#4f9070" stroke-width="1.215" stroke-linecap="round" stroke-dasharray="0.9 3.0 1.4 2.4 0.7 3.9" stroke-dashoffset="3.9"/>
<path d="M160.5 264.9C161.3 266.2 164.4 270.4 165.8 273.2C167.2 276.0 168.2 280.3 168.7 281.8" fill="none" stroke="#acdcc0" stroke-width="1.35" stroke-linecap="round" />
<path d="M160.5 264.9C161.3 266.2 164.4 270.4 165.8 273.2C167.2 276.0 168.2 280.3 168.7 281.8" fill="none" stroke="#4f9070" stroke-width="1.215" stroke-linecap="round" stroke-dasharray="0.9 3.0 1.4 2.4 0.7 3.9" stroke-dashoffset="2.2"/>
<path d="M195.3 253.3C196.3 256.1 199.9 264.5 201.7 270.4C203.4 276.3 204.9 285.6 205.6 288.6" fill="none" stroke="#92c6a6" stroke-width="1.35" stroke-linecap="round" />
<path d="M195.3 253.3C196.3 256.1 199.9 264.5 201.7 270.4C203.4 276.3 204.9 285.6 205.6 288.6" fill="none" stroke="#4f9070" stroke-width="1.215" stroke-linecap="round" stroke-dasharray="0.9 3.0 1.4 2.4 0.7 3.9" stroke-dashoffset="0.2"/>
<path d="M141.9 248.0C143.6 250.4 149.4 257.5 152.3 262.7C155.3 267.9 158.5 276.4 159.8 279.2" fill="none" stroke="#92c6a6" stroke-width="1.35" stroke-linecap="round" />
<path d="M141.9 248.0C143.6 250.4 149.4 257.5 152.3 262.7C155.3 267.9 158.5 276.4 159.8 279.2" fill="none" stroke="#4f9070" stroke-width="1.215" stroke-linecap="round" stroke-dasharray="0.9 3.0 1.4 2.4 0.7 3.9" stroke-dashoffset="2.1"/>
<path d="M144.7 262.2C145.8 263.5 149.6 267.5 151.2 270.2C152.9 272.9 154.2 277.2 154.8 278.6" fill="none" stroke="#e6ae38" stroke-width="1.15" stroke-linecap="round" />
<path d="M144.7 262.2C145.8 263.5 149.6 267.5 151.2 270.2C152.9 272.9 154.2 277.2 154.8 278.6" fill="none" stroke="#b8821e" stroke-width="1.035" stroke-linecap="round" stroke-dasharray="0.9 3.0 1.4 2.4 0.7 3.9" stroke-dashoffset="2.5"/>
<path d="M207.0 247.4C207.7 251.1 210.0 262.4 211.0 269.9C212.0 277.4 212.7 288.7 213.1 292.4" fill="none" stroke="#acdcc0" stroke-width="1.35" stroke-linecap="round" />
<path d="M207.0 247.4C207.7 251.1 210.0 262.4 211.0 269.9C212.0 277.4 212.7 288.7 213.1 292.4" fill="none" stroke="#4f9070" stroke-width="1.215" stroke-linecap="round" stroke-dasharray="0.9 3.0 1.4 2.4 0.7 3.9" stroke-dashoffset="4.7"/>
<path d="M137.4 253.5C138.8 255.2 143.2 260.1 145.5 263.8C147.9 267.5 150.5 273.8 151.5 275.8" fill="none" stroke="#acdcc0" stroke-width="1.35" stroke-linecap="round" />
<path d="M137.4 253.5C138.8 255.2 143.2 260.1 145.5 263.8C147.9 267.5 150.5 273.8 151.5 275.8" fill="none" stroke="#4f9070" stroke-width="1.215" stroke-linecap="round" stroke-dasharray="0.9 3.0 1.4 2.4 0.7 3.9" stroke-dashoffset="4.8"/>
<path d="M185.3 253.4C186.3 256.1 189.6 264.1 191.4 269.7C193.2 275.4 195.3 284.5 196.1 287.4" fill="none" stroke="#92c6a6" stroke-width="1.35" stroke-linecap="round" />
<path d="M185.3 253.4C186.3 256.1 189.6 264.1 191.4 269.7C193.2 275.4 195.3 284.5 196.1 287.4" fill="none" stroke="#4f9070" stroke-width="1.215" stroke-linecap="round" stroke-dasharray="0.9 3.0 1.4 2.4 0.7 3.9" stroke-dashoffset="1.6"/>
<path d="M164.3 248.6C165.8 251.5 170.5 260.1 173.3 266.1C176.1 272.1 179.7 281.7 181.0 284.8" fill="none" stroke="#92c6a6" stroke-width="1.35" stroke-linecap="round" />
<path d="M164.3 248.6C165.8 251.5 170.5 260.1 173.3 266.1C176.1 272.1 179.7 281.7 181.0 284.8" fill="none" stroke="#4f9070" stroke-width="1.215" stroke-linecap="round" stroke-dasharray="0.9 3.0 1.4 2.4 0.7 3.9" stroke-dashoffset="2.0"/>
<path d="M198.9 222.8C200.2 228.4 204.7 244.9 206.8 256.4C209.0 267.9 210.9 285.9 211.8 291.8" fill="none" stroke="#e6ae38" stroke-width="1.15" stroke-linecap="round" />
<path d="M198.9 222.8C200.2 228.4 204.7 244.9 206.8 256.4C209.0 267.9 210.9 285.9 211.8 291.8" fill="none" stroke="#b8821e" stroke-width="1.035" stroke-linecap="round" stroke-dasharray="0.9 3.0 1.4 2.4 0.7 3.9" stroke-dashoffset="2.8"/>
<path d="M149.1 234.9C151.4 238.9 158.9 250.4 163.2 258.7C167.4 267.0 172.7 280.4 174.6 284.8" fill="none" stroke="#acdcc0" stroke-width="1.35" stroke-linecap="round" />
<path d="M149.1 234.9C151.4 238.9 158.9 250.4 163.2 258.7C167.4 267.0 172.7 280.4 174.6 284.8" fill="none" stroke="#4f9070" stroke-width="1.215" stroke-linecap="round" stroke-dasharray="0.9 3.0 1.4 2.4 0.7 3.9" stroke-dashoffset="5.0"/>
<path d="M188.0 254.3C189.0 257.0 192.3 265.0 194.0 270.7C195.6 276.5 197.3 285.7 198.0 288.7" fill="none" stroke="#acdcc0" stroke-width="1.35" stroke-linecap="round" />
<path d="M188.0 254.3C189.0 257.0 192.3 265.0 194.0 270.7C195.6 276.5 197.3 285.7 198.0 288.7" fill="none" stroke="#4f9070" stroke-width="1.215" stroke-linecap="round" stroke-dasharray="0.9 3.0 1.4 2.4 0.7 3.9" stroke-dashoffset="3.3"/>
<path d="M213.5 262.3C213.8 264.8 215.0 271.9 215.5 276.9C216.0 282.0 216.3 290.0 216.5 292.6" fill="none" stroke="#92c6a6" stroke-width="1.35" stroke-linecap="round" />
<path d="M213.5 262.3C213.8 264.8 215.0 271.9 215.5 276.9C216.0 282.0 216.3 290.0 216.5 292.6" fill="none" stroke="#4f9070" stroke-width="1.215" stroke-linecap="round" stroke-dasharray="0.9 3.0 1.4 2.4 0.7 3.9" stroke-dashoffset="0.3"/>
<path d="M140.3 246.0C142.0 248.5 147.6 255.7 150.5 261.3C153.4 266.9 156.4 276.4 157.6 279.4" fill="none" stroke="#92c6a6" stroke-width="1.35" stroke-linecap="round" />
<path d="M140.3 246.0C142.0 248.5 147.6 255.7 150.5 261.3C153.4 266.9 156.4 276.4 157.6 279.4" fill="none" stroke="#4f9070" stroke-width="1.215" stroke-linecap="round" stroke-dasharray="0.9 3.0 1.4 2.4 0.7 3.9" stroke-dashoffset="0.4"/>
<path d="M197.1 265.9C198.0 267.8 201.3 273.4 202.4 277.5C203.5 281.6 203.6 288.5 203.9 290.6" fill="none" stroke="#e6ae38" stroke-width="1.15" stroke-linecap="round" />
<path d="M197.1 265.9C198.0 267.8 201.3 273.4 202.4 277.5C203.5 281.6 203.6 288.5 203.9 290.6" fill="none" stroke="#b8821e" stroke-width="1.035" stroke-linecap="round" stroke-dasharray="0.9 3.0 1.4 2.4 0.7 3.9" stroke-dashoffset="0.7"/>
<path d="M179.1 239.4C180.7 243.3 185.9 255.2 188.6 263.0C191.3 270.9 194.1 282.8 195.2 286.7" fill="none" stroke="#acdcc0" stroke-width="1.35" stroke-linecap="round" />
<path d="M179.1 239.4C180.7 243.3 185.9 255.2 188.6 263.0C191.3 270.9 194.1 282.8 195.2 286.7" fill="none" stroke="#4f9070" stroke-width="1.215" stroke-linecap="round" stroke-dasharray="0.9 3.0 1.4 2.4 0.7 3.9" stroke-dashoffset="3.3"/>
<path d="M139.7 252.7C141.4 254.8 147.1 260.8 149.7 265.0C152.4 269.2 154.8 275.7 155.8 277.9" fill="none" stroke="#acdcc0" stroke-width="1.35" stroke-linecap="round" />
<path d="M139.7 252.7C141.4 254.8 147.1 260.8 149.7 265.0C152.4 269.2 154.8 275.7 155.8 277.9" fill="none" stroke="#4f9070" stroke-width="1.215" stroke-linecap="round" stroke-dasharray="0.9 3.0 1.4 2.4 0.7 3.9" stroke-dashoffset="3.4"/>
<path d="M208.0 269.7C208.5 271.5 210.2 277.0 211.0 280.7C211.7 284.4 212.2 290.1 212.5 292.0" fill="none" stroke="#92c6a6" stroke-width="1.35" stroke-linecap="round" />
<path d="M208.0 269.7C208.5 271.5 210.2 277.0 211.0 280.7C211.7 284.4 212.2 290.1 212.5 292.0" fill="none" stroke="#4f9070" stroke-width="1.215" stroke-linecap="round" stroke-dasharray="0.9 3.0 1.4 2.4 0.7 3.9" stroke-dashoffset="3.7"/>
<path d="M145.0 238.2C147.0 241.6 153.8 251.7 157.3 258.8C160.8 265.8 164.5 276.8 165.9 280.4" fill="none" stroke="#92c6a6" stroke-width="1.35" stroke-linecap="round" />
<path d="M145.0 238.2C147.0 241.6 153.8 251.7 157.3 258.8C160.8 265.8 164.5 276.8 165.9 280.4" fill="none" stroke="#4f9070" stroke-width="1.215" stroke-linecap="round" stroke-dasharray="0.9 3.0 1.4 2.4 0.7 3.9" stroke-dashoffset="3.9"/>
<path d="M156.9 237.5C158.6 241.3 164.3 252.1 167.3 260.0C170.4 267.9 173.8 280.7 175.1 284.8" fill="none" stroke="#e6ae38" stroke-width="1.15" stroke-linecap="round" />
<path d="M156.9 237.5C158.6 241.3 164.3 252.1 167.3 260.0C170.4 267.9 173.8 280.7 175.1 284.8" fill="none" stroke="#b8821e" stroke-width="1.035" stroke-linecap="round" stroke-dasharray="0.9 3.0 1.4 2.4 0.7 3.9" stroke-dashoffset="0.6"/>
<path d="M204.6 231.7C205.5 236.7 208.7 251.4 210.3 261.4C211.9 271.3 213.6 286.3 214.2 291.3" fill="none" stroke="#acdcc0" stroke-width="1.35" stroke-linecap="round" />
<path d="M204.6 231.7C205.5 236.7 208.7 251.4 210.3 261.4C211.9 271.3 213.6 286.3 214.2 291.3" fill="none" stroke="#4f9070" stroke-width="1.215" stroke-linecap="round" stroke-dasharray="0.9 3.0 1.4 2.4 0.7 3.9" stroke-dashoffset="2.2"/>
<path d="M177.7 213.3C179.6 219.4 186.1 237.1 189.4 249.6C192.7 262.1 195.9 282.0 197.2 288.4" fill="none" stroke="#acdcc0" stroke-width="1.35" stroke-linecap="round" />
<path d="M177.7 213.3C179.6 219.4 186.1 237.1 189.4 249.6C192.7 262.1 195.9 282.0 197.2 288.4" fill="none" stroke="#4f9070" stroke-width="1.215" stroke-linecap="round" stroke-dasharray="0.9 3.0 1.4 2.4 0.7 3.9" stroke-dashoffset="4.3"/>
<path d="M156.9 267.5C157.7 268.6 160.6 271.7 161.8 274.1C163.0 276.6 163.8 280.9 164.2 282.3" fill="none" stroke="#92c6a6" stroke-width="1.35" stroke-linecap="round" />
<path d="M156.9 267.5C157.7 268.6 160.6 271.7 161.8 274.1C163.0 276.6 163.8 280.9 164.2 282.3" fill="none" stroke="#4f9070" stroke-width="1.215" stroke-linecap="round" stroke-dasharray="0.9 3.0 1.4 2.4 0.7 3.9" stroke-dashoffset="3.6"/>
<path d="M209.1 252.4C209.8 255.4 212.5 264.3 213.5 270.6C214.4 276.9 214.5 287.0 214.7 290.2" fill="none" stroke="#92c6a6" stroke-width="1.35" stroke-linecap="round" />
<path d="M209.1 252.4C209.8 255.4 212.5 264.3 213.5 270.6C214.4 276.9 214.5 287.0 214.7 290.2" fill="none" stroke="#4f9070" stroke-width="1.215" stroke-linecap="round" stroke-dasharray="0.9 3.0 1.4 2.4 0.7 3.9" stroke-dashoffset="2.4"/>
<path d="M169.4 262.0C170.3 263.7 173.1 268.4 174.5 272.2C175.9 275.9 177.2 282.3 177.7 284.4" fill="none" stroke="#e6ae38" stroke-width="1.15" stroke-linecap="round" />
<path d="M169.4 262.0C170.3 263.7 173.1 268.4 174.5 272.2C175.9 275.9 177.2 282.3 177.7 284.4" fill="none" stroke="#b8821e" stroke-width="1.035" stroke-linecap="round" stroke-dasharray="0.9 3.0 1.4 2.4 0.7 3.9" stroke-dashoffset="1.5"/>
<path d="M159.8 254.5C161.0 256.9 165.2 264.0 167.3 269.0C169.4 273.9 171.6 281.5 172.5 284.1" fill="none" stroke="#acdcc0" stroke-width="1.35" stroke-linecap="round" />
<path d="M159.8 254.5C161.0 256.9 165.2 264.0 167.3 269.0C169.4 273.9 171.6 281.5 172.5 284.1" fill="none" stroke="#4f9070" stroke-width="1.215" stroke-linecap="round" stroke-dasharray="0.9 3.0 1.4 2.4 0.7 3.9" stroke-dashoffset="0.6"/>
<path d="M149.2 233.4C151.2 237.4 158.1 249.3 161.6 257.3C165.1 265.3 168.7 277.5 170.1 281.5" fill="none" stroke="#acdcc0" stroke-width="1.35" stroke-linecap="round" />
<path d="M149.2 233.4C151.2 237.4 158.1 249.3 161.6 257.3C165.1 265.3 168.7 277.5 170.1 281.5" fill="none" stroke="#4f9070" stroke-width="1.215" stroke-linecap="round" stroke-dasharray="0.9 3.0 1.4 2.4 0.7 3.9" stroke-dashoffset="3.9"/>
<path d="M148.3 232.3C150.5 236.3 157.5 247.9 161.4 256.5C165.4 265.0 170.3 279.1 172.0 283.7" fill="none" stroke="#92c6a6" stroke-width="1.35" stroke-linecap="round" />
<path d="M148.3 232.3C150.5 236.3 157.5 247.9 161.4 256.5C165.4 265.0 170.3 279.1 172.0 283.7" fill="none" stroke="#4f9070" stroke-width="1.215" stroke-linecap="round" stroke-dasharray="0.9 3.0 1.4 2.4 0.7 3.9" stroke-dashoffset="4.3"/>
<path d="M175.1 255.5C176.2 258.0 180.1 265.2 181.8 270.3C183.4 275.4 184.3 283.4 184.7 286.1" fill="none" stroke="#92c6a6" stroke-width="1.35" stroke-linecap="round" />
<path d="M175.1 255.5C176.2 258.0 180.1 265.2 181.8 270.3C183.4 275.4 184.3 283.4 184.7 286.1" fill="none" stroke="#4f9070" stroke-width="1.215" stroke-linecap="round" stroke-dasharray="0.9 3.0 1.4 2.4 0.7 3.9" stroke-dashoffset="4.2"/>
<path d="M144.8 229.4C146.9 233.5 153.5 245.3 157.3 254.0C161.1 262.7 165.7 276.8 167.4 281.4" fill="none" stroke="#e6ae38" stroke-width="1.15" stroke-linecap="round" />
<path d="M144.8 229.4C146.9 233.5 153.5 245.3 157.3 254.0C161.1 262.7 165.7 276.8 167.4 281.4" fill="none" stroke="#b8821e" stroke-width="1.035" stroke-linecap="round" stroke-dasharray="0.9 3.0 1.4 2.4 0.7 3.9" stroke-dashoffset="3.6"/>
<path d="M174.8 242.2C176.3 245.8 181.3 256.6 183.9 263.9C186.4 271.2 189.1 282.3 190.1 285.9" fill="none" stroke="#acdcc0" stroke-width="1.35" stroke-linecap="round" />
<path d="M174.8 242.2C176.3 245.8 181.3 256.6 183.9 263.9C186.4 271.2 189.1 282.3 190.1 285.9" fill="none" stroke="#4f9070" stroke-width="1.215" stroke-linecap="round" stroke-dasharray="0.9 3.0 1.4 2.4 0.7 3.9" stroke-dashoffset="4.5"/>
<path d="M147.0 242.4C149.0 245.6 155.5 254.9 158.9 261.3C162.2 267.7 165.6 277.5 166.9 280.8" fill="none" stroke="#acdcc0" stroke-width="1.35" stroke-linecap="round" />
<path d="M147.0 242.4C149.0 245.6 155.5 254.9 158.9 261.3C162.2 267.7 165.6 277.5 166.9 280.8" fill="none" stroke="#4f9070" stroke-width="1.215" stroke-linecap="round" stroke-dasharray="0.9 3.0 1.4 2.4 0.7 3.9" stroke-dashoffset="0.8"/>
<path d="M153.5 223.9C155.6 228.6 162.0 242.3 165.8 252.0C169.6 261.7 174.4 277.3 176.1 282.4" fill="none" stroke="#92c6a6" stroke-width="1.35" stroke-linecap="round" />
<path d="M153.5 223.9C155.6 228.6 162.0 242.3 165.8 252.0C169.6 261.7 174.4 277.3 176.1 282.4" fill="none" stroke="#4f9070" stroke-width="1.215" stroke-linecap="round" stroke-dasharray="0.9 3.0 1.4 2.4 0.7 3.9" stroke-dashoffset="3.1"/>
<path d="M141.8 241.9C143.9 244.8 150.8 253.2 154.6 259.6C158.5 265.9 163.3 276.6 165.0 280.0" fill="none" stroke="#92c6a6" stroke-width="1.35" stroke-linecap="round" />
<path d="M141.8 241.9C143.9 244.8 150.8 253.2 154.6 259.6C158.5 265.9 163.3 276.6 165.0 280.0" fill="none" stroke="#4f9070" stroke-width="1.215" stroke-linecap="round" stroke-dasharray="0.9 3.0 1.4 2.4 0.7 3.9" stroke-dashoffset="4.7"/>
<path d="M199.5 231.7C200.6 236.5 204.3 250.7 206.0 260.4C207.6 270.1 208.9 285.1 209.5 290.1" fill="none" stroke="#e6ae38" stroke-width="1.15" stroke-linecap="round" />
<path d="M199.5 231.7C200.6 236.5 204.3 250.7 206.0 260.4C207.6 270.1 208.9 285.1 209.5 290.1" fill="none" stroke="#b8821e" stroke-width="1.035" stroke-linecap="round" stroke-dasharray="0.9 3.0 1.4 2.4 0.7 3.9" stroke-dashoffset="3.7"/>
<path d="M186.8 261.4C187.6 263.3 190.4 268.9 191.7 273.0C193.0 277.2 193.9 284.2 194.4 286.5" fill="none" stroke="#acdcc0" stroke-width="1.35" stroke-linecap="round" />
<path d="M186.8 261.4C187.6 263.3 190.4 268.9 191.7 273.0C193.0 277.2 193.9 284.2 194.4 286.5" fill="none" stroke="#4f9070" stroke-width="1.215" stroke-linecap="round" stroke-dasharray="0.9 3.0 1.4 2.4 0.7 3.9" stroke-dashoffset="4.8"/>
<path d="M145.3 247.9C146.8 250.3 151.6 256.9 154.4 262.1C157.2 267.3 160.8 276.3 162.1 279.2" fill="none" stroke="#acdcc0" stroke-width="1.35" stroke-linecap="round" />
<path d="M145.3 247.9C146.8 250.3 151.6 256.9 154.4 262.1C157.2 267.3 160.8 276.3 162.1 279.2" fill="none" stroke="#4f9070" stroke-width="1.215" stroke-linecap="round" stroke-dasharray="0.9 3.0 1.4 2.4 0.7 3.9" stroke-dashoffset="3.8"/>
<path d="M136.6 258.2C138.1 259.7 142.9 263.8 145.3 267.1C147.6 270.4 150.0 276.1 150.9 277.9" fill="none" stroke="#92c6a6" stroke-width="1.35" stroke-linecap="round" />
<path d="M136.6 258.2C138.1 259.7 142.9 263.8 145.3 267.1C147.6 270.4 150.0 276.1 150.9 277.9" fill="none" stroke="#4f9070" stroke-width="1.215" stroke-linecap="round" stroke-dasharray="0.9 3.0 1.4 2.4 0.7 3.9" stroke-dashoffset="2.8"/>
<path d="M172.9 232.6C174.3 236.8 178.8 249.2 181.4 258.1C184.0 266.9 187.3 281.0 188.5 285.6" fill="none" stroke="#92c6a6" stroke-width="1.35" stroke-linecap="round" />
<path d="M172.9 232.6C174.3 236.8 178.8 249.2 181.4 258.1C184.0 266.9 187.3 281.0 188.5 285.6" fill="none" stroke="#4f9070" stroke-width="1.215" stroke-linecap="round" stroke-dasharray="0.9 3.0 1.4 2.4 0.7 3.9" stroke-dashoffset="0.4"/>
<path d="M190.1 232.0C191.7 236.7 196.9 250.2 199.6 259.9C202.3 269.6 205.2 285.0 206.3 290.0" fill="none" stroke="#e6ae38" stroke-width="1.15" stroke-linecap="round" />
<path d="M190.1 232.0C191.7 236.7 196.9 250.2 199.6 259.9C202.3 269.6 205.2 285.0 206.3 290.0" fill="none" stroke="#b8821e" stroke-width="1.035" stroke-linecap="round" stroke-dasharray="0.9 3.0 1.4 2.4 0.7 3.9" stroke-dashoffset="0.9"/>
<path d="M138.0 254.4C139.3 256.2 143.4 261.5 145.9 265.1C148.4 268.8 151.7 274.6 152.8 276.5" fill="none" stroke="#acdcc0" stroke-width="1.35" stroke-linecap="round" />
<path d="M138.0 254.4C139.3 256.2 143.4 261.5 145.9 265.1C148.4 268.8 151.7 274.6 152.8 276.5" fill="none" stroke="#4f9070" stroke-width="1.215" stroke-linecap="round" stroke-dasharray="0.9 3.0 1.4 2.4 0.7 3.9" stroke-dashoffset="1.9"/>
<path d="M195.5 242.2C196.7 246.3 200.4 258.5 202.5 266.7C204.6 274.9 207.3 287.3 208.3 291.4" fill="none" stroke="#acdcc0" stroke-width="1.35" stroke-linecap="round" />
<path d="M195.5 242.2C196.7 246.3 200.4 258.5 202.5 266.7C204.6 274.9 207.3 287.3 208.3 291.4" fill="none" stroke="#4f9070" stroke-width="1.215" stroke-linecap="round" stroke-dasharray="0.9 3.0 1.4 2.4 0.7 3.9" stroke-dashoffset="0.5"/>
<path d="M193.5 258.1C194.1 260.4 196.2 266.9 197.3 271.9C198.3 277.0 199.4 285.7 199.8 288.5" fill="none" stroke="#92c6a6" stroke-width="1.35" stroke-linecap="round" />
<path d="M193.5 258.1C194.1 260.4 196.2 266.9 197.3 271.9C198.3 277.0 199.4 285.7 199.8 288.5" fill="none" stroke="#4f9070" stroke-width="1.215" stroke-linecap="round" stroke-dasharray="0.9 3.0 1.4 2.4 0.7 3.9" stroke-dashoffset="1.5"/>
<path d="M142.2 245.2C144.0 248.0 149.8 256.4 152.6 262.2C155.5 267.9 158.1 276.8 159.3 279.8" fill="none" stroke="#92c6a6" stroke-width="1.35" stroke-linecap="round" />
<path d="M142.2 245.2C144.0 248.0 149.8 256.4 152.6 262.2C155.5 267.9 158.1 276.8 159.3 279.8" fill="none" stroke="#4f9070" stroke-width="1.215" stroke-linecap="round" stroke-dasharray="0.9 3.0 1.4 2.4 0.7 3.9" stroke-dashoffset="1.4"/>
<path d="M134.5 256.0C135.9 257.0 140.1 258.6 143.0 262.0C145.9 265.4 150.5 274.1 152.0 276.5" fill="none" stroke="#acdcc0" stroke-width="1.2" stroke-linecap="round" />
<path d="M134.5 256.0C135.9 257.0 140.1 258.6 143.0 262.0C145.9 265.4 150.5 274.1 152.0 276.5" fill="none" stroke="#4f9070" stroke-width="1.08" stroke-linecap="round" stroke-dasharray="0.8 1.7 1.3 1.4 0.6 2.2" stroke-dashoffset="2.3"/>
<path d="M136.0 251.0C137.5 252.3 142.0 254.7 145.0 259.0C148.0 263.3 152.5 274.0 154.0 277.0" fill="none" stroke="#acdcc0" stroke-width="1.2" stroke-linecap="round" />
<path d="M136.0 251.0C137.5 252.3 142.0 254.7 145.0 259.0C148.0 263.3 152.5 274.0 154.0 277.0" fill="none" stroke="#4f9070" stroke-width="1.08" stroke-linecap="round" stroke-dasharray="0.8 1.7 1.3 1.4 0.6 2.2" stroke-dashoffset="3.2"/>
<path d="M138.0 246.0C139.5 247.8 144.0 251.8 147.0 257.0C150.0 262.2 154.5 274.1 156.0 277.5" fill="none" stroke="#acdcc0" stroke-width="1.2" stroke-linecap="round" />
<path d="M138.0 246.0C139.5 247.8 144.0 251.8 147.0 257.0C150.0 262.2 154.5 274.1 156.0 277.5" fill="none" stroke="#4f9070" stroke-width="1.08" stroke-linecap="round" stroke-dasharray="0.8 1.7 1.3 1.4 0.6 2.2" stroke-dashoffset="2.2"/>
<polygon points="229.0,234.0 236.5,240.0 237.3,262.0 237.0,290.0 236.2,320.0 236.8,329.5 228.6,329.5 229.6,310.0 230.6,285.0 230.8,260.0 229.6,245.0" fill="#79514a" />
<polygon points="232.1,327.0 216.3,338.0 216.7,338.6 233.9,330.0" fill="#79514a" />
<polygon points="232.0,330.6 253.9,336.5 254.1,335.9 233.0,327.4" fill="#79514a" />
<polygon points="229.9,326.0 224.9,333.0 226.1,334.0 232.1,328.0" fill="#79514a" />
<polygon points="208.0,211.0 219.0,216.0 222.0,225.0 224.0,238.0 225.5,262.0 225.2,285.0 218.5,305.0 211.5,322.0 206.0,336.0 199.5,334.0 205.0,318.0 211.5,302.0 216.0,287.5 218.0,271.0 217.0,255.0 215.5,238.0 211.5,221.0" fill="#79514a" />
<polygon points="203.1,332.3 176.4,347.5 176.6,348.1 204.9,335.7" fill="#79514a" />
<polygon points="201.4,336.6 217.3,345.5 217.7,345.1 203.6,333.4" fill="#79514a" />
<polygon points="195.5,338.5 181.8,354.8 182.2,355.2 197.5,340.5" fill="#79514a" />
<path d="M215 218 L219.5 240 L221.8 262 L221.5 284 L214.5 305 L203 334" fill="none" stroke="#5a3830" stroke-width="0.7" stroke-linecap="round" opacity="0.6"/>
<path d="M232.5 240 L234 262 L233.5 290 L232.5 326" fill="none" stroke="#5a3830" stroke-width="0.7" stroke-linecap="round" opacity="0.6"/>
<path d="M184.0 104.0C183.2 103.2 179.3 101.0 179.0 99.0C178.7 97.0 180.2 93.8 182.0 92.0C183.8 90.2 187.3 88.5 190.0 88.0C192.7 87.5 195.7 88.0 198.0 89.0C200.3 90.0 202.2 91.5 204.0 94.0C205.8 96.5 207.8 100.7 209.0 104.0C210.2 107.3 211.0 110.7 211.0 114.0C211.0 117.3 210.5 120.8 209.0 124.0C207.5 127.2 204.2 130.3 202.0 133.0C199.8 135.7 196.8 137.2 196.0 140.0C195.2 142.8 197.0 145.8 197.0 150.0C197.0 154.2 196.0 160.0 196.0 165.0C196.0 170.0 196.2 175.5 197.0 180.0C197.8 184.5 200.7 189.3 201.0 192.0C201.3 194.7 200.3 196.0 199.0 196.0C197.7 196.0 195.2 194.0 193.0 192.0C190.8 190.0 187.9 187.3 185.5 184.0C183.1 180.7 180.4 176.3 178.5 172.0C176.6 167.7 174.8 162.2 173.8 158.0C172.8 153.8 172.1 150.2 172.3 147.0C172.5 143.8 173.9 141.5 175.2 139.0C176.5 136.5 178.4 134.2 180.0 132.0C181.6 129.8 183.3 128.1 184.8 126.0C186.3 123.9 188.1 121.5 189.0 119.5C189.9 117.5 190.4 115.8 190.2 114.0C190.0 112.2 188.9 109.8 188.0 108.5C187.1 107.2 185.5 106.4 185.0 106.0Z" fill="#b6aab0"/>
<path d="M204.0 97.0C204.8 98.5 207.8 102.8 209.0 106.0C210.2 109.2 211.1 112.8 211.0 116.0C210.9 119.2 210.0 122.2 208.5 125.0C207.0 127.8 204.0 130.5 202.0 133.0C200.0 135.5 197.4 137.2 196.5 140.0C195.6 142.8 196.9 145.7 196.8 150.0C196.7 154.3 196.0 161.0 196.0 166.0C196.0 171.0 196.2 175.7 197.0 180.0C197.8 184.3 200.8 189.5 201.0 192.0C201.2 194.5 199.5 195.7 198.0 195.0C196.5 194.3 193.6 191.8 192.0 188.0C190.4 184.2 189.2 177.7 188.5 172.0C187.8 166.3 187.8 159.3 188.0 154.0C188.2 148.7 188.5 144.0 189.5 140.0C190.5 136.0 192.4 133.2 194.0 130.0C195.6 126.8 197.9 124.0 199.0 121.0C200.1 118.0 200.5 115.0 200.5 112.0C200.5 109.0 199.2 104.5 199.0 103.0Z" fill="#9b8684" opacity="0.8"/>
<ellipse cx="189" cy="100" rx="9.5" ry="7" fill="#b6aab0"/>
<clipPath id="nc"><path d="M184.0 104.0C183.2 103.2 179.3 101.0 179.0 99.0C178.7 97.0 180.2 93.8 182.0 92.0C183.8 90.2 187.3 88.5 190.0 88.0C192.7 87.5 195.7 88.0 198.0 89.0C200.3 90.0 202.2 91.5 204.0 94.0C205.8 96.5 207.8 100.7 209.0 104.0C210.2 107.3 211.0 110.7 211.0 114.0C211.0 117.3 210.5 120.8 209.0 124.0C207.5 127.2 204.2 130.3 202.0 133.0C199.8 135.7 196.8 137.2 196.0 140.0C195.2 142.8 197.0 145.8 197.0 150.0C197.0 154.2 196.0 160.0 196.0 165.0C196.0 170.0 196.2 175.5 197.0 180.0C197.8 184.5 200.7 189.3 201.0 192.0C201.3 194.7 200.3 196.0 199.0 196.0C197.7 196.0 195.2 194.0 193.0 192.0C190.8 190.0 187.9 187.3 185.5 184.0C183.1 180.7 180.4 176.3 178.5 172.0C176.6 167.7 174.8 162.2 173.8 158.0C172.8 153.8 172.1 150.2 172.3 147.0C172.5 143.8 173.9 141.5 175.2 139.0C176.5 136.5 178.4 134.2 180.0 132.0C181.6 129.8 183.3 128.1 184.8 126.0C186.3 123.9 188.1 121.5 189.0 119.5C189.9 117.5 190.4 115.8 190.2 114.0C190.0 112.2 188.9 109.8 188.0 108.5C187.1 107.2 185.5 106.4 185.0 106.0Z"/><ellipse cx="189" cy="100" rx="9.5" ry="7"/></clipPath>
<g clip-path="url(#nc)">
<path d="M171.0 93.2C172.7 93.8 178.3 94.4 181.0 96.2C183.7 98.1 185.9 101.2 187.0 104.2C188.1 107.2 188.3 110.9 187.5 114.2C186.7 117.6 184.3 121.1 182.0 124.2C179.7 127.4 175.7 129.9 173.5 133.2C171.3 136.6 169.8 140.1 169.0 144.2C168.2 148.4 168.3 153.6 169.0 158.2C169.7 162.9 171.3 167.9 173.0 172.2C174.7 176.6 177.2 180.8 179.0 184.2C180.8 187.8 183.2 191.8 184.0 193.2" fill="none" stroke="#cdc2cc" stroke-width="0.8" stroke-linecap="round" opacity="0.75" stroke-dasharray="1.3 0.9 0.8 1.2" stroke-dashoffset="1.0"/>
<path d="M172.5 93.6C174.2 94.1 179.8 94.8 182.5 96.6C185.2 98.5 187.4 101.6 188.5 104.6C189.6 107.6 189.8 111.3 189.0 114.6C188.2 118.0 185.8 121.5 183.5 124.6C181.2 127.8 177.2 130.3 175.0 133.6C172.8 137.0 171.2 140.5 170.5 144.6C169.8 148.8 169.8 154.0 170.5 158.6C171.2 163.3 172.8 168.3 174.5 172.6C176.2 177.0 178.7 181.1 180.5 184.6C182.3 188.1 184.7 192.1 185.5 193.6" fill="none" stroke="#9d8d92" stroke-width="0.8" stroke-linecap="round" opacity="0.75" stroke-dasharray="1.3 0.9 0.8 1.2" stroke-dashoffset="2.2"/>
<path d="M174.0 94.0C175.7 94.5 181.3 95.2 184.0 97.0C186.7 98.8 188.9 102.0 190.0 105.0C191.1 108.0 191.3 111.7 190.5 115.0C189.7 118.3 187.3 121.8 185.0 125.0C182.7 128.2 178.7 130.7 176.5 134.0C174.3 137.3 172.8 140.8 172.0 145.0C171.2 149.2 171.3 154.3 172.0 159.0C172.7 163.7 174.3 168.7 176.0 173.0C177.7 177.3 180.2 181.5 182.0 185.0C183.8 188.5 186.2 192.5 187.0 194.0" fill="none" stroke="#c3b7c0" stroke-width="0.8" stroke-linecap="round" opacity="0.75" stroke-dasharray="1.3 0.9 0.8 1.2" stroke-dashoffset="1.5"/>
<path d="M175.5 94.4C177.2 94.9 182.8 95.5 185.5 97.4C188.2 99.2 190.4 102.4 191.5 105.4C192.6 108.4 192.8 112.0 192.0 115.4C191.2 118.7 188.8 122.2 186.5 125.4C184.2 128.5 180.2 131.0 178.0 134.4C175.8 137.7 174.2 141.2 173.5 145.4C172.8 149.5 172.8 154.7 173.5 159.4C174.2 164.0 175.8 169.0 177.5 173.4C179.2 177.7 181.7 181.9 183.5 185.4C185.3 188.9 187.7 192.9 188.5 194.4" fill="none" stroke="#a99a9e" stroke-width="0.8" stroke-linecap="round" opacity="0.75" stroke-dasharray="1.3 0.9 0.8 1.2" stroke-dashoffset="2.4"/>
<path d="M177.0 94.8C178.7 95.2 184.3 95.9 187.0 97.8C189.7 99.6 191.9 102.8 193.0 105.8C194.1 108.8 194.3 112.4 193.5 115.8C192.7 119.1 190.3 122.6 188.0 125.8C185.7 128.9 181.7 131.4 179.5 134.8C177.3 138.1 175.8 141.6 175.0 145.8C174.2 149.9 174.3 155.1 175.0 159.8C175.7 164.4 177.3 169.4 179.0 173.8C180.7 178.1 183.2 182.2 185.0 185.8C186.8 189.2 189.2 193.2 190.0 194.8" fill="none" stroke="#cdc2cc" stroke-width="0.8" stroke-linecap="round" opacity="0.75" stroke-dasharray="1.3 0.9 0.8 1.2" stroke-dashoffset="2.5"/>
<path d="M178.5 95.1C180.2 95.6 185.8 96.3 188.5 98.1C191.2 100.0 193.4 103.1 194.5 106.1C195.6 109.1 195.8 112.8 195.0 116.1C194.2 119.5 191.8 123.0 189.5 126.1C187.2 129.3 183.2 131.8 181.0 135.1C178.8 138.5 177.2 142.0 176.5 146.1C175.8 150.3 175.8 155.5 176.5 160.1C177.2 164.8 178.8 169.8 180.5 174.1C182.2 178.5 184.7 182.6 186.5 186.1C188.3 189.6 190.7 193.6 191.5 195.1" fill="none" stroke="#9d8d92" stroke-width="0.8" stroke-linecap="round" opacity="0.75" stroke-dasharray="1.3 0.9 0.8 1.2" stroke-dashoffset="0.3"/>
<path d="M180.0 95.5C181.7 96.0 187.3 96.7 190.0 98.5C192.7 100.3 194.9 103.5 196.0 106.5C197.1 109.5 197.3 113.2 196.5 116.5C195.7 119.8 193.3 123.3 191.0 126.5C188.7 129.7 184.7 132.2 182.5 135.5C180.3 138.8 178.8 142.3 178.0 146.5C177.2 150.7 177.3 155.8 178.0 160.5C178.7 165.2 180.3 170.2 182.0 174.5C183.7 178.8 186.2 183.0 188.0 186.5C189.8 190.0 192.2 194.0 193.0 195.5" fill="none" stroke="#c3b7c0" stroke-width="0.8" stroke-linecap="round" opacity="0.75" stroke-dasharray="1.3 0.9 0.8 1.2" stroke-dashoffset="0.1"/>
<path d="M181.5 95.9C183.2 96.4 188.8 97.0 191.5 98.9C194.2 100.7 196.4 103.9 197.5 106.9C198.6 109.9 198.8 113.5 198.0 116.9C197.2 120.2 194.8 123.7 192.5 126.9C190.2 130.0 186.2 132.5 184.0 135.9C181.8 139.2 180.2 142.7 179.5 146.9C178.8 151.0 178.8 156.2 179.5 160.9C180.2 165.5 181.8 170.5 183.5 174.9C185.2 179.2 187.7 183.4 189.5 186.9C191.3 190.4 193.7 194.4 194.5 195.9" fill="none" stroke="#a99a9e" stroke-width="0.8" stroke-linecap="round" opacity="0.75" stroke-dasharray="1.3 0.9 0.8 1.2" stroke-dashoffset="3.3"/>
<path d="M183.0 96.2C184.7 96.8 190.3 97.4 193.0 99.2C195.7 101.1 197.9 104.2 199.0 107.2C200.1 110.2 200.3 113.9 199.5 117.2C198.7 120.6 196.3 124.1 194.0 127.2C191.7 130.4 187.7 132.9 185.5 136.2C183.3 139.6 181.8 143.1 181.0 147.2C180.2 151.4 180.3 156.6 181.0 161.2C181.7 165.9 183.3 170.9 185.0 175.2C186.7 179.6 189.2 183.8 191.0 187.2C192.8 190.8 195.2 194.8 196.0 196.2" fill="none" stroke="#cdc2cc" stroke-width="0.8" stroke-linecap="round" opacity="0.75" stroke-dasharray="1.3 0.9 0.8 1.2" stroke-dashoffset="1.0"/>
<path d="M184.5 96.6C186.2 97.1 191.8 97.8 194.5 99.6C197.2 101.5 199.4 104.6 200.5 107.6C201.6 110.6 201.8 114.3 201.0 117.6C200.2 121.0 197.8 124.5 195.5 127.6C193.2 130.8 189.2 133.3 187.0 136.6C184.8 140.0 183.2 143.5 182.5 147.6C181.8 151.8 181.8 157.0 182.5 161.6C183.2 166.3 184.8 171.3 186.5 175.6C188.2 180.0 190.7 184.1 192.5 187.6C194.3 191.1 196.7 195.1 197.5 196.6" fill="none" stroke="#9d8d92" stroke-width="0.8" stroke-linecap="round" opacity="0.75" stroke-dasharray="1.3 0.9 0.8 1.2" stroke-dashoffset="0.9"/>
<path d="M186.0 97.0C187.7 97.5 193.3 98.2 196.0 100.0C198.7 101.8 200.9 105.0 202.0 108.0C203.1 111.0 203.3 114.7 202.5 118.0C201.7 121.3 199.3 124.8 197.0 128.0C194.7 131.2 190.7 133.7 188.5 137.0C186.3 140.3 184.8 143.8 184.0 148.0C183.2 152.2 183.3 157.3 184.0 162.0C184.7 166.7 186.3 171.7 188.0 176.0C189.7 180.3 192.2 184.5 194.0 188.0C195.8 191.5 198.2 195.5 199.0 197.0" fill="none" stroke="#c3b7c0" stroke-width="0.8" stroke-linecap="round" opacity="0.75" stroke-dasharray="1.3 0.9 0.8 1.2" stroke-dashoffset="4.0"/>
<path d="M187.5 97.4C189.2 97.9 194.8 98.5 197.5 100.4C200.2 102.2 202.4 105.4 203.5 108.4C204.6 111.4 204.8 115.0 204.0 118.4C203.2 121.7 200.8 125.2 198.5 128.4C196.2 131.5 192.2 134.0 190.0 137.4C187.8 140.7 186.2 144.2 185.5 148.4C184.8 152.5 184.8 157.7 185.5 162.4C186.2 167.0 187.8 172.0 189.5 176.4C191.2 180.7 193.7 184.9 195.5 188.4C197.3 191.9 199.7 195.9 200.5 197.4" fill="none" stroke="#a99a9e" stroke-width="0.8" stroke-linecap="round" opacity="0.75" stroke-dasharray="1.3 0.9 0.8 1.2" stroke-dashoffset="1.9"/>
<path d="M189.0 97.8C190.7 98.2 196.3 98.9 199.0 100.8C201.7 102.6 203.9 105.8 205.0 108.8C206.1 111.8 206.3 115.4 205.5 118.8C204.7 122.1 202.3 125.6 200.0 128.8C197.7 131.9 193.7 134.4 191.5 137.8C189.3 141.1 187.8 144.6 187.0 148.8C186.2 152.9 186.3 158.1 187.0 162.8C187.7 167.4 189.3 172.4 191.0 176.8C192.7 181.1 195.2 185.2 197.0 188.8C198.8 192.2 201.2 196.2 202.0 197.8" fill="none" stroke="#cdc2cc" stroke-width="0.8" stroke-linecap="round" opacity="0.75" stroke-dasharray="1.3 0.9 0.8 1.2" stroke-dashoffset="3.3"/>
<path d="M190.5 98.1C192.2 98.6 197.8 99.3 200.5 101.1C203.2 103.0 205.4 106.1 206.5 109.1C207.6 112.1 207.8 115.8 207.0 119.1C206.2 122.5 203.8 126.0 201.5 129.1C199.2 132.3 195.2 134.8 193.0 138.1C190.8 141.5 189.2 145.0 188.5 149.1C187.8 153.3 187.8 158.5 188.5 163.1C189.2 167.8 190.8 172.8 192.5 177.1C194.2 181.5 196.7 185.6 198.5 189.1C200.3 192.6 202.7 196.6 203.5 198.1" fill="none" stroke="#9d8d92" stroke-width="0.8" stroke-linecap="round" opacity="0.75" stroke-dasharray="1.3 0.9 0.8 1.2" stroke-dashoffset="1.9"/>
<path d="M192.0 98.5C193.7 99.0 199.3 99.7 202.0 101.5C204.7 103.3 206.9 106.5 208.0 109.5C209.1 112.5 209.3 116.2 208.5 119.5C207.7 122.8 205.3 126.3 203.0 129.5C200.7 132.7 196.7 135.2 194.5 138.5C192.3 141.8 190.8 145.3 190.0 149.5C189.2 153.7 189.3 158.8 190.0 163.5C190.7 168.2 192.3 173.2 194.0 177.5C195.7 181.8 198.2 186.0 200.0 189.5C201.8 193.0 204.2 197.0 205.0 198.5" fill="none" stroke="#c3b7c0" stroke-width="0.8" stroke-linecap="round" opacity="0.75" stroke-dasharray="1.3 0.9 0.8 1.2" stroke-dashoffset="2.6"/>
<path d="M193.5 98.9C195.2 99.4 200.8 100.0 203.5 101.9C206.2 103.7 208.4 106.9 209.5 109.9C210.6 112.9 210.8 116.5 210.0 119.9C209.2 123.2 206.8 126.7 204.5 129.9C202.2 133.0 198.2 135.5 196.0 138.9C193.8 142.2 192.2 145.7 191.5 149.9C190.8 154.0 190.8 159.2 191.5 163.9C192.2 168.5 193.8 173.5 195.5 177.9C197.2 182.2 199.7 186.4 201.5 189.9C203.3 193.4 205.7 197.4 206.5 198.9" fill="none" stroke="#a99a9e" stroke-width="0.8" stroke-linecap="round" opacity="0.75" stroke-dasharray="1.3 0.9 0.8 1.2" stroke-dashoffset="0.6"/>
<path d="M195.0 99.2C196.7 99.8 202.3 100.4 205.0 102.2C207.7 104.1 209.9 107.2 211.0 110.2C212.1 113.2 212.3 116.9 211.5 120.2C210.7 123.6 208.3 127.1 206.0 130.2C203.7 133.4 199.7 135.9 197.5 139.2C195.3 142.6 193.8 146.1 193.0 150.2C192.2 154.4 192.3 159.6 193.0 164.2C193.7 168.9 195.3 173.9 197.0 178.2C198.7 182.6 201.2 186.8 203.0 190.2C204.8 193.8 207.2 197.8 208.0 199.2" fill="none" stroke="#cdc2cc" stroke-width="0.8" stroke-linecap="round" opacity="0.75" stroke-dasharray="1.3 0.9 0.8 1.2" stroke-dashoffset="2.5"/>
<path d="M196.5 99.6C198.2 100.1 203.8 100.8 206.5 102.6C209.2 104.5 211.4 107.6 212.5 110.6C213.6 113.6 213.8 117.3 213.0 120.6C212.2 124.0 209.8 127.5 207.5 130.6C205.2 133.8 201.2 136.3 199.0 139.6C196.8 143.0 195.2 146.5 194.5 150.6C193.8 154.8 193.8 160.0 194.5 164.6C195.2 169.3 196.8 174.3 198.5 178.6C200.2 183.0 202.7 187.1 204.5 190.6C206.3 194.1 208.7 198.1 209.5 199.6" fill="none" stroke="#9d8d92" stroke-width="0.8" stroke-linecap="round" opacity="0.75" stroke-dasharray="1.3 0.9 0.8 1.2" stroke-dashoffset="3.5"/>
<path d="M198.0 100.0C199.7 100.5 205.3 101.2 208.0 103.0C210.7 104.8 212.9 108.0 214.0 111.0C215.1 114.0 215.3 117.7 214.5 121.0C213.7 124.3 211.3 127.8 209.0 131.0C206.7 134.2 202.7 136.7 200.5 140.0C198.3 143.3 196.8 146.8 196.0 151.0C195.2 155.2 195.3 160.3 196.0 165.0C196.7 169.7 198.3 174.7 200.0 179.0C201.7 183.3 204.2 187.5 206.0 191.0C207.8 194.5 210.2 198.5 211.0 200.0" fill="none" stroke="#c3b7c0" stroke-width="0.8" stroke-linecap="round" opacity="0.75" stroke-dasharray="1.3 0.9 0.8 1.2" stroke-dashoffset="2.1"/>
<path d="M199.5 100.4C201.2 100.9 206.8 101.5 209.5 103.4C212.2 105.2 214.4 108.4 215.5 111.4C216.6 114.4 216.8 118.0 216.0 121.4C215.2 124.7 212.8 128.2 210.5 131.4C208.2 134.5 204.2 137.0 202.0 140.4C199.8 143.7 198.2 147.2 197.5 151.4C196.8 155.5 196.8 160.7 197.5 165.4C198.2 170.0 199.8 175.0 201.5 179.4C203.2 183.7 205.7 187.9 207.5 191.4C209.3 194.9 211.7 198.9 212.5 200.4" fill="none" stroke="#a99a9e" stroke-width="0.8" stroke-linecap="round" opacity="0.75" stroke-dasharray="1.3 0.9 0.8 1.2" stroke-dashoffset="3.0"/>
<path d="M205.0 97.0C205.8 98.5 208.5 102.8 209.5 106.0C210.5 109.2 211.2 112.8 211.0 116.0C210.8 119.2 210.0 122.2 208.5 125.0C207.0 127.8 204.0 130.5 202.0 133.0C200.0 135.5 197.4 137.2 196.5 140.0C195.6 142.8 196.9 145.7 196.8 150.0C196.7 154.3 196.0 161.0 196.0 166.0C196.0 171.0 196.2 175.7 197.0 180.0C197.8 184.3 200.8 189.5 201.0 192.0C201.2 194.5 199.3 195.7 198.0 195.0C196.7 194.3 194.3 191.8 193.0 188.0C191.7 184.2 190.5 177.7 190.0 172.0C189.5 166.3 189.8 159.2 190.0 154.0C190.2 148.8 190.5 144.8 191.5 141.0C192.5 137.2 194.4 134.2 196.0 131.0C197.6 127.8 199.8 125.2 201.0 122.0C202.2 118.8 203.0 115.2 203.0 112.0C203.0 108.8 201.3 104.5 201.0 103.0Z" fill="#8f7674" opacity="0.5"/>
<path d="M176.0 150.0C175.8 151.3 174.2 154.7 174.5 158.0C174.8 161.3 176.4 166.2 178.0 170.0C179.6 173.8 182.3 179.7 184.0 181.0C185.7 182.3 188.3 180.5 188.0 178.0C187.7 175.5 183.3 170.0 182.0 166.0C180.7 162.0 180.3 157.3 180.0 154.0C179.7 150.7 180.0 147.3 180.0 146.0Z" fill="#d2c8d2" opacity="0.45"/>
</g>
<linearGradient id="bg" x1="1" y1="0" x2="0" y2="1"><stop offset="0" stop-color="#265a6e"/><stop offset="0.55" stop-color="#2d667a"/><stop offset="1" stop-color="#37748a"/></linearGradient>
<pattern id="st" width="4" height="3.2" patternUnits="userSpaceOnUse" patternTransform="rotate(28)"><path d="M0.3 0.4L1.5 2.2" stroke="#5690a4" stroke-width="0.7" stroke-linecap="round" opacity="0.55"/><path d="M2.3 1.2L3.5 3" stroke="#1c4a5a" stroke-width="0.7" stroke-linecap="round" opacity="0.7"/><path d="M2.2 -0.6L3 0.6" stroke="#4a889c" stroke-width="0.6" stroke-linecap="round" opacity="0.6"/></pattern>
<path d="M210.5 141.0C212.4 141.2 218.2 141.0 222.0 142.0C225.8 143.0 229.5 144.5 233.0 146.8C236.5 149.1 240.1 152.8 243.0 156.0C245.9 159.2 247.7 161.8 250.5 166.0C253.3 170.2 256.8 175.9 260.0 181.0C263.2 186.1 266.7 191.1 269.5 196.6C272.3 202.1 275.0 208.1 277.0 214.0C279.0 219.9 280.3 226.0 281.5 232.0C282.7 238.0 283.4 245.0 284.0 250.0C284.6 255.0 285.2 258.4 285.3 262.0C285.4 265.6 285.7 269.8 284.8 271.5C283.9 273.2 282.1 272.6 280.0 272.5C277.9 272.4 274.8 271.6 272.0 270.8C269.2 270.0 265.5 269.2 263.0 267.5C260.5 265.8 259.7 263.3 257.0 260.5C254.3 257.7 250.1 253.4 247.0 250.5C243.9 247.6 241.7 245.8 238.5 243.0C235.3 240.2 232.2 238.7 228.0 234.0C223.8 229.3 217.6 220.2 213.5 215.0C209.4 209.8 206.1 206.2 203.5 203.0C200.9 199.8 199.2 198.5 198.0 195.5C196.8 192.5 196.4 190.1 196.0 185.0C195.6 179.9 195.5 170.7 195.5 165.0C195.5 159.3 195.1 154.5 196.0 151.0C196.9 147.5 198.6 145.7 201.0 144.0C203.4 142.3 208.9 141.5 210.5 141.0Z" fill="url(#bg)"/>
<path d="M210.5 141.0C212.4 141.2 218.2 141.0 222.0 142.0C225.8 143.0 229.5 144.5 233.0 146.8C236.5 149.1 240.1 152.8 243.0 156.0C245.9 159.2 247.7 161.8 250.5 166.0C253.3 170.2 256.8 175.9 260.0 181.0C263.2 186.1 266.7 191.1 269.5 196.6C272.3 202.1 275.0 208.1 277.0 214.0C279.0 219.9 280.3 226.0 281.5 232.0C282.7 238.0 283.4 245.0 284.0 250.0C284.6 255.0 285.2 258.4 285.3 262.0C285.4 265.6 285.7 269.8 284.8 271.5C283.9 273.2 282.1 272.6 280.0 272.5C277.9 272.4 274.8 271.6 272.0 270.8C269.2 270.0 265.5 269.2 263.0 267.5C260.5 265.8 259.7 263.3 257.0 260.5C254.3 257.7 250.1 253.4 247.0 250.5C243.9 247.6 241.7 245.8 238.5 243.0C235.3 240.2 232.2 238.7 228.0 234.0C223.8 229.3 217.6 220.2 213.5 215.0C209.4 209.8 206.1 206.2 203.5 203.0C200.9 199.8 199.2 198.5 198.0 195.5C196.8 192.5 196.4 190.1 196.0 185.0C195.6 179.9 195.5 170.7 195.5 165.0C195.5 159.3 195.1 154.5 196.0 151.0C196.9 147.5 198.6 145.7 201.0 144.0C203.4 142.3 208.9 141.5 210.5 141.0Z" fill="url(#st)"/>
<clipPath id="bc"><path d="M210.5 141.0C212.4 141.2 218.2 141.0 222.0 142.0C225.8 143.0 229.5 144.5 233.0 146.8C236.5 149.1 240.1 152.8 243.0 156.0C245.9 159.2 247.7 161.8 250.5 166.0C253.3 170.2 256.8 175.9 260.0 181.0C263.2 186.1 266.7 191.1 269.5 196.6C272.3 202.1 275.0 208.1 277.0 214.0C279.0 219.9 280.3 226.0 281.5 232.0C282.7 238.0 283.4 245.0 284.0 250.0C284.6 255.0 285.2 258.4 285.3 262.0C285.4 265.6 285.7 269.8 284.8 271.5C283.9 273.2 282.1 272.6 280.0 272.5C277.9 272.4 274.8 271.6 272.0 270.8C269.2 270.0 265.5 269.2 263.0 267.5C260.5 265.8 259.7 263.3 257.0 260.5C254.3 257.7 250.1 253.4 247.0 250.5C243.9 247.6 241.7 245.8 238.5 243.0C235.3 240.2 232.2 238.7 228.0 234.0C223.8 229.3 217.6 220.2 213.5 215.0C209.4 209.8 206.1 206.2 203.5 203.0C200.9 199.8 199.2 198.5 198.0 195.5C196.8 192.5 196.4 190.1 196.0 185.0C195.6 179.9 195.5 170.7 195.5 165.0C195.5 159.3 195.1 154.5 196.0 151.0C196.9 147.5 198.6 145.7 201.0 144.0C203.4 142.3 208.9 141.5 210.5 141.0Z"/></clipPath>
<g clip-path="url(#bc)">
<path d="M196.0 142.0C199.2 141.0 207.7 133.7 215.0 136.0C222.3 138.3 232.2 146.8 240.0 156.0C247.8 165.2 253.7 177.7 262.0 191.0C270.3 204.3 285.3 228.5 290.0 236.0" fill="none" stroke="#1f5060" stroke-width="1.0" stroke-linecap="round" opacity="0.35"/>
<path d="M197.3 148.4C200.8 147.5 210.4 140.9 218.2 143.0C226.0 145.2 236.0 152.4 243.8 161.1C251.7 169.9 257.5 182.4 265.2 195.5C272.9 208.6 285.9 232.4 290.0 239.8" fill="none" stroke="#1f5060" stroke-width="1.0" stroke-linecap="round" opacity="0.35"/>
<path d="M198.6 154.8C202.4 154.0 213.2 148.2 221.4 150.1C229.6 152.0 239.8 157.9 247.7 166.2C255.5 174.6 261.3 187.1 268.4 200.0C275.5 212.9 286.4 236.4 290.0 243.7" fill="none" stroke="#1f5060" stroke-width="1.0" stroke-linecap="round" opacity="0.35"/>
<path d="M199.8 161.2C204.0 160.5 216.0 155.4 224.6 157.1C233.2 158.8 243.7 163.5 251.5 171.4C259.4 179.2 265.2 191.7 271.6 204.4C278.0 217.1 286.9 240.3 290.0 247.5" fill="none" stroke="#1f5060" stroke-width="1.0" stroke-linecap="round" opacity="0.35"/>
<path d="M201.1 167.6C205.6 167.0 218.8 162.7 227.8 164.2C236.8 165.6 247.5 169.0 255.4 176.5C263.2 183.9 269.0 196.4 274.8 208.9C280.6 221.4 287.5 244.3 290.0 251.4" fill="none" stroke="#1f5060" stroke-width="1.0" stroke-linecap="round" opacity="0.35"/>
<path d="M202.4 174.0C207.2 173.5 221.5 169.9 231.0 171.2C240.5 172.5 251.4 174.6 259.2 181.6C267.0 188.6 272.9 201.1 278.0 213.4C283.1 225.7 288.0 248.2 290.0 255.2" fill="none" stroke="#1f5060" stroke-width="1.0" stroke-linecap="round" opacity="0.35"/>
<path d="M203.7 180.4C208.8 180.0 224.3 177.2 234.2 178.2C244.1 179.3 255.2 180.1 263.0 186.7C270.9 193.3 276.7 205.8 281.2 217.9C285.7 229.9 288.5 252.2 290.0 259.0" fill="none" stroke="#1f5060" stroke-width="1.0" stroke-linecap="round" opacity="0.35"/>
<path d="M205.0 186.8C210.4 186.5 227.1 184.4 237.4 185.3C247.7 186.1 259.0 185.7 266.9 191.8C274.7 198.0 280.5 210.5 284.4 222.4C288.3 234.2 289.1 256.1 290.0 262.9" fill="none" stroke="#1f5060" stroke-width="1.0" stroke-linecap="round" opacity="0.35"/>
<path d="M206.2 193.2C212.0 193.1 229.9 191.7 240.6 192.3C251.3 192.9 262.9 191.2 270.7 197.0C278.6 202.7 284.4 215.2 287.6 226.8C290.8 238.5 289.6 260.1 290.0 266.7" fill="none" stroke="#1f5060" stroke-width="1.0" stroke-linecap="round" opacity="0.35"/>
<path d="M207.5 199.6C213.6 199.6 232.6 198.9 243.8 199.4C255.0 199.8 266.7 196.8 274.6 202.1C282.4 207.4 288.2 219.9 290.8 231.3C293.4 242.7 290.1 264.0 290.0 270.6" fill="none" stroke="#1f5060" stroke-width="1.0" stroke-linecap="round" opacity="0.35"/>
<path d="M208.8 206.0C215.2 206.1 235.4 206.2 247.0 206.4C258.6 206.6 270.6 202.3 278.4 207.2C286.2 212.1 292.1 224.6 294.0 235.8C295.9 247.0 290.7 268.0 290.0 274.4" fill="none" stroke="#1f5060" stroke-width="1.0" stroke-linecap="round" opacity="0.35"/>
<path d="M210.1 212.4C216.8 212.6 238.2 213.5 250.2 213.4C262.2 213.4 274.4 207.8 282.2 212.3C290.1 216.8 295.9 229.3 297.2 240.3C298.5 251.3 291.2 271.9 290.0 278.2" fill="none" stroke="#1f5060" stroke-width="1.0" stroke-linecap="round" opacity="0.35"/>
<path d="M211.4 218.8C218.4 219.1 240.9 220.7 253.4 220.5C265.9 220.3 278.2 213.4 286.1 217.4C293.9 221.5 299.7 234.0 300.4 244.8C301.1 255.5 291.7 275.9 290.0 282.1" fill="none" stroke="#1f5060" stroke-width="1.0" stroke-linecap="round" opacity="0.35"/>
</g>
<path d="M207.0 199.0C209.2 200.7 214.8 205.0 220.0 209.0C225.2 213.0 232.6 219.1 238.0 223.0C243.4 226.9 247.6 229.1 252.7 232.5C257.8 235.9 263.4 240.2 268.3 243.5C273.2 246.8 280.0 250.6 282.4 252.0" fill="none" stroke="#4a8ea4" stroke-width="2.2" stroke-linecap="round" opacity="0.35"/>
<path d="M207.0 196.0C209.2 197.7 214.8 202.0 220.0 206.0C225.2 210.0 232.6 216.1 238.0 220.0C243.4 223.9 247.6 226.1 252.7 229.5C257.8 232.9 263.4 237.2 268.3 240.5C273.2 243.8 280.0 247.6 282.4 249.0" fill="none" stroke="#434836" stroke-width="2.5" stroke-linecap="round" opacity="0.8" stroke-dasharray="5 0.8 3 0.5"/>
<path d="M258.4 253.3C260.8 254.2 268.3 257.3 272.5 259.0C276.7 260.7 281.9 262.6 283.8 263.3" fill="none" stroke="#46493a" stroke-width="1.6" stroke-linecap="round" opacity="0.8"/>
<path d="M205 204 L212 214 L221 222 L213 223 L207 214Z" fill="#79514a"/>
<path d="M169.5 101.0C169.9 100.5 170.9 99.1 172.0 98.0C173.1 96.9 174.0 95.6 176.0 94.2C178.0 92.8 181.3 90.7 184.0 89.5C186.7 88.3 189.7 87.7 192.0 87.3C194.3 86.9 196.0 86.9 198.0 87.3C200.0 87.7 202.2 88.6 204.0 89.8C205.8 91.0 206.7 92.6 209.0 94.5C211.3 96.4 214.8 99.5 218.0 101.2C221.2 102.9 225.0 104.0 228.0 104.8C231.0 105.6 233.4 106.2 236.0 106.3C238.6 106.4 243.8 105.2 243.8 105.6C243.8 106.0 238.6 108.1 236.0 108.6C233.4 109.1 230.7 109.1 228.0 108.8C225.3 108.5 222.3 107.6 220.0 106.8C217.7 106.0 214.2 103.4 214.0 103.8C213.8 104.2 217.3 107.5 219.0 109.0C220.7 110.5 222.2 111.7 224.0 113.0C225.8 114.3 230.1 116.2 229.8 116.6C229.5 117.0 224.5 116.1 222.0 115.2C219.5 114.3 217.0 112.6 215.0 111.0C213.0 109.4 211.6 107.5 210.0 105.5C208.4 103.5 207.2 100.7 205.5 99.0C203.8 97.3 201.9 96.1 200.0 95.2C198.1 94.3 196.0 93.7 194.0 93.6C192.0 93.5 189.9 93.9 188.0 94.6C186.1 95.2 184.1 96.4 182.5 97.5C180.9 98.6 179.8 99.8 178.5 101.0C177.2 102.2 176.5 104.5 175.0 104.5C173.5 104.5 170.4 101.6 169.5 101.0Z" fill="#3b4640"/>
<path d="M180 95 C188 90.5 198 89.5 205 93.5" fill="none" stroke="#55625a" stroke-width="0.7" stroke-linecap="round" opacity="0.7"/>
<circle cx="179.3" cy="98.3" r="1.5" fill="#e0961e"/><circle cx="179.3" cy="98.3" r="0.55" fill="#222"/>
<path d="M140.8 112.4 C141.5 110.3 146 108.3 152 106.2 L169.5 99.6 L175.8 101.5 L175.2 106.8 C166 109.8 154 113 146 114.3 C143 114.7 141 113.8 140.8 112.4Z" fill="#e3a220"/>
<path d="M151.5 109.4 L173.5 103.4" fill="none" stroke="#4a4020" stroke-width="1.0" stroke-linecap="round" />
<path d="M143 112 L168 102.6" fill="none" stroke="#f2c24a" stroke-width="0.9" stroke-linecap="round" opacity="0.8"/>
<path d="M145 113.6 L172 106.8" fill="none" stroke="#c88a14" stroke-width="0.8" stroke-linecap="round" opacity="0.8"/>
<path d="M180.0 359.0C182.1 360.8 188.8 366.0 192.6 369.5C196.5 373.1 201.4 378.3 203.1 380.0" fill="none" stroke="#e6ae38" stroke-width="1.15" stroke-linecap="round" />
<path d="M180.0 359.0C182.1 360.8 188.8 366.0 192.6 369.5C196.5 373.1 201.4 378.3 203.1 380.0" fill="none" stroke="#b8821e" stroke-width="1.035" stroke-linecap="round" stroke-dasharray="0.6 2.4 1.0 1.9 0.5 3.1" stroke-dashoffset="2.5"/>
<path d="M184.0 364.0C186.0 365.2 192.4 368.6 195.9 371.2C199.5 373.8 204.0 378.2 205.6 379.6" fill="none" stroke="#92c6a6" stroke-width="1.35" stroke-linecap="round" />
<path d="M184.0 364.0C186.0 365.2 192.4 368.6 195.9 371.2C199.5 373.8 204.0 378.2 205.6 379.6" fill="none" stroke="#4f9070" stroke-width="1.215" stroke-linecap="round" stroke-dasharray="0.6 2.4 1.0 1.9 0.5 3.1" stroke-dashoffset="0.1"/>
<path d="M190.0 356.0C191.7 357.8 197.3 362.7 200.5 366.6C203.6 370.5 207.4 377.1 208.8 379.2" fill="none" stroke="#acdcc0" stroke-width="1.35" stroke-linecap="round" />
<path d="M190.0 356.0C191.7 357.8 197.3 362.7 200.5 366.6C203.6 370.5 207.4 377.1 208.8 379.2" fill="none" stroke="#4f9070" stroke-width="1.215" stroke-linecap="round" stroke-dasharray="0.6 2.4 1.0 1.9 0.5 3.1" stroke-dashoffset="2.2"/>
<path d="M195.0 354.0C196.5 356.5 201.6 364.9 204.0 369.0C206.4 373.1 208.5 377.1 209.4 378.8" fill="none" stroke="#e6ae38" stroke-width="1.15" stroke-linecap="round" />
<path d="M195.0 354.0C196.5 356.5 201.6 364.9 204.0 369.0C206.4 373.1 208.5 377.1 209.4 378.8" fill="none" stroke="#b8821e" stroke-width="1.035" stroke-linecap="round" stroke-dasharray="0.6 2.4 1.0 1.9 0.5 3.1" stroke-dashoffset="0.2"/>
<path d="M199.0 352.0C199.9 354.4 203.3 361.9 204.6 366.6C205.9 371.3 206.4 377.9 206.8 380.1" fill="none" stroke="#92c6a6" stroke-width="1.35" stroke-linecap="round" />
<path d="M199.0 352.0C199.9 354.4 203.3 361.9 204.6 366.6C205.9 371.3 206.4 377.9 206.8 380.1" fill="none" stroke="#4f9070" stroke-width="1.215" stroke-linecap="round" stroke-dasharray="0.6 2.4 1.0 1.9 0.5 3.1" stroke-dashoffset="1.1"/>
<path d="M203.0 349.0C203.4 351.6 204.1 359.6 205.2 364.5C206.3 369.5 208.9 376.2 209.6 378.6" fill="none" stroke="#acdcc0" stroke-width="1.35" stroke-linecap="round" />
<path d="M203.0 349.0C203.4 351.6 204.1 359.6 205.2 364.5C206.3 369.5 208.9 376.2 209.6 378.6" fill="none" stroke="#4f9070" stroke-width="1.215" stroke-linecap="round" stroke-dasharray="0.6 2.4 1.0 1.9 0.5 3.1" stroke-dashoffset="2.5"/>
<path d="M208.0 345.0C208.0 348.0 207.5 357.4 207.8 363.1C208.1 368.9 209.4 376.8 209.8 379.6" fill="none" stroke="#e6ae38" stroke-width="1.15" stroke-linecap="round" />
<path d="M208.0 345.0C208.0 348.0 207.5 357.4 207.8 363.1C208.1 368.9 209.4 376.8 209.8 379.6" fill="none" stroke="#b8821e" stroke-width="1.035" stroke-linecap="round" stroke-dasharray="0.6 2.4 1.0 1.9 0.5 3.1" stroke-dashoffset="1.4"/>
<path d="M212.0 350.0C211.8 352.9 211.4 362.2 211.0 367.5C210.6 372.9 209.8 379.5 209.6 381.9" fill="none" stroke="#92c6a6" stroke-width="1.35" stroke-linecap="round" />
<path d="M212.0 350.0C211.8 352.9 211.4 362.2 211.0 367.5C210.6 372.9 209.8 379.5 209.6 381.9" fill="none" stroke="#4f9070" stroke-width="1.215" stroke-linecap="round" stroke-dasharray="0.6 2.4 1.0 1.9 0.5 3.1" stroke-dashoffset="0.9"/>
<path d="M215.0 354.0C214.8 356.4 213.5 363.6 213.5 368.2C213.6 372.9 214.9 379.6 215.1 381.8" fill="none" stroke="#acdcc0" stroke-width="1.35" stroke-linecap="round" />
<path d="M215.0 354.0C214.8 356.4 213.5 363.6 213.5 368.2C213.6 372.9 214.9 379.6 215.1 381.8" fill="none" stroke="#4f9070" stroke-width="1.215" stroke-linecap="round" stroke-dasharray="0.6 2.4 1.0 1.9 0.5 3.1" stroke-dashoffset="3.6"/>
<path d="M183.0 374.0C184.9 374.9 190.6 378.5 194.5 379.6C198.5 380.7 204.7 380.4 206.7 380.5" fill="none" stroke="#e6ae38" stroke-width="1.15" stroke-linecap="round" />
<path d="M183.0 374.0C184.9 374.9 190.6 378.5 194.5 379.6C198.5 380.7 204.7 380.4 206.7 380.5" fill="none" stroke="#b8821e" stroke-width="1.035" stroke-linecap="round" stroke-dasharray="0.6 2.4 1.0 1.9 0.5 3.1" stroke-dashoffset="3.4"/>
<path d="M188.0 370.0C189.7 371.2 195.4 375.6 198.4 377.2C201.4 378.8 204.5 379.2 205.7 379.6" fill="none" stroke="#92c6a6" stroke-width="1.35" stroke-linecap="round" />
<path d="M188.0 370.0C189.7 371.2 195.4 375.6 198.4 377.2C201.4 378.8 204.5 379.2 205.7 379.6" fill="none" stroke="#4f9070" stroke-width="1.215" stroke-linecap="round" stroke-dasharray="0.6 2.4 1.0 1.9 0.5 3.1" stroke-dashoffset="2.5"/>
<path d="M206.0 352.0C206.3 354.6 206.7 363.1 207.5 367.6C208.4 372.0 210.5 376.9 211.1 378.8" fill="none" stroke="#acdcc0" stroke-width="1.35" stroke-linecap="round" />
<path d="M206.0 352.0C206.3 354.6 206.7 363.1 207.5 367.6C208.4 372.0 210.5 376.9 211.1 378.8" fill="none" stroke="#4f9070" stroke-width="1.215" stroke-linecap="round" stroke-dasharray="0.6 2.4 1.0 1.9 0.5 3.1" stroke-dashoffset="2.1"/>
<path d="M220.0 358.0C219.5 360.2 218.2 367.2 216.9 370.9C215.6 374.7 212.9 378.9 212.1 380.4" fill="none" stroke="#e6ae38" stroke-width="1.15" stroke-linecap="round" />
<path d="M220.0 358.0C219.5 360.2 218.2 367.2 216.9 370.9C215.6 374.7 212.9 378.9 212.1 380.4" fill="none" stroke="#b8821e" stroke-width="1.035" stroke-linecap="round" stroke-dasharray="0.6 2.4 1.0 1.9 0.5 3.1" stroke-dashoffset="1.9"/>
<path d="M212.0 350.0C213.6 352.5 217.7 359.9 221.5 365.2C225.3 370.5 232.4 379.0 234.6 381.8" fill="none" stroke="#e6ae38" stroke-width="1.15" stroke-linecap="round" />
<path d="M212.0 350.0C213.6 352.5 217.7 359.9 221.5 365.2C225.3 370.5 232.4 379.0 234.6 381.8" fill="none" stroke="#b8821e" stroke-width="1.035" stroke-linecap="round" stroke-dasharray="0.6 2.4 1.0 1.9 0.5 3.1" stroke-dashoffset="4.2"/>
<path d="M217.0 345.0C218.3 348.2 222.1 358.5 225.0 364.5C227.9 370.5 233.0 378.3 234.6 381.1" fill="none" stroke="#92c6a6" stroke-width="1.35" stroke-linecap="round" />
<path d="M217.0 345.0C218.3 348.2 222.1 358.5 225.0 364.5C227.9 370.5 233.0 378.3 234.6 381.1" fill="none" stroke="#4f9070" stroke-width="1.215" stroke-linecap="round" stroke-dasharray="0.6 2.4 1.0 1.9 0.5 3.1" stroke-dashoffset="3.0"/>
<path d="M222.0 327.5C223.0 331.9 226.0 345.4 228.2 354.1C230.3 362.8 233.8 375.3 234.9 379.6" fill="none" stroke="#acdcc0" stroke-width="1.35" stroke-linecap="round" />
<path d="M222.0 327.5C223.0 331.9 226.0 345.4 228.2 354.1C230.3 362.8 233.8 375.3 234.9 379.6" fill="none" stroke="#4f9070" stroke-width="1.215" stroke-linecap="round" stroke-dasharray="0.6 2.4 1.0 1.9 0.5 3.1" stroke-dashoffset="3.6"/>
<path d="M226.0 333.0C227.0 337.3 230.1 350.3 232.1 358.6C234.1 366.8 236.9 378.6 237.8 382.6" fill="none" stroke="#e6ae38" stroke-width="1.15" stroke-linecap="round" />
<path d="M226.0 333.0C227.0 337.3 230.1 350.3 232.1 358.6C234.1 366.8 236.9 378.6 237.8 382.6" fill="none" stroke="#b8821e" stroke-width="1.035" stroke-linecap="round" stroke-dasharray="0.6 2.4 1.0 1.9 0.5 3.1" stroke-dashoffset="1.3"/>
<path d="M231.0 337.0C231.2 340.6 231.9 351.5 232.4 358.6C233.0 365.7 233.9 376.2 234.1 379.7" fill="none" stroke="#92c6a6" stroke-width="1.35" stroke-linecap="round" />
<path d="M231.0 337.0C231.2 340.6 231.9 351.5 232.4 358.6C233.0 365.7 233.9 376.2 234.1 379.7" fill="none" stroke="#4f9070" stroke-width="1.215" stroke-linecap="round" stroke-dasharray="0.6 2.4 1.0 1.9 0.5 3.1" stroke-dashoffset="1.9"/>
<path d="M236.0 340.0C236.3 343.5 237.4 353.9 238.0 360.8C238.6 367.8 239.3 378.2 239.5 381.7" fill="none" stroke="#acdcc0" stroke-width="1.35" stroke-linecap="round" />
<path d="M236.0 340.0C236.3 343.5 237.4 353.9 238.0 360.8C238.6 367.8 239.3 378.2 239.5 381.7" fill="none" stroke="#4f9070" stroke-width="1.215" stroke-linecap="round" stroke-dasharray="0.6 2.4 1.0 1.9 0.5 3.1" stroke-dashoffset="0.1"/>
<path d="M241.0 338.0C240.7 342.0 240.0 355.1 239.4 362.1C238.9 369.2 238.1 377.3 237.8 380.3" fill="none" stroke="#e6ae38" stroke-width="1.15" stroke-linecap="round" />
<path d="M241.0 338.0C240.7 342.0 240.0 355.1 239.4 362.1C238.9 369.2 238.1 377.3 237.8 380.3" fill="none" stroke="#b8821e" stroke-width="1.035" stroke-linecap="round" stroke-dasharray="0.6 2.4 1.0 1.9 0.5 3.1" stroke-dashoffset="3.4"/>
<path d="M245.0 336.0C244.6 340.2 243.8 353.5 242.7 361.3C241.5 369.1 238.7 379.1 237.9 382.7" fill="none" stroke="#92c6a6" stroke-width="1.35" stroke-linecap="round" />
<path d="M245.0 336.0C244.6 340.2 243.8 353.5 242.7 361.3C241.5 369.1 238.7 379.1 237.9 382.7" fill="none" stroke="#4f9070" stroke-width="1.215" stroke-linecap="round" stroke-dasharray="0.6 2.4 1.0 1.9 0.5 3.1" stroke-dashoffset="4.5"/>
<path d="M249.0 338.0C248.3 342.2 246.0 355.6 244.8 363.0C243.6 370.3 242.2 378.9 241.7 382.1" fill="none" stroke="#acdcc0" stroke-width="1.35" stroke-linecap="round" />
<path d="M249.0 338.0C248.3 342.2 246.0 355.6 244.8 363.0C243.6 370.3 242.2 378.9 241.7 382.1" fill="none" stroke="#4f9070" stroke-width="1.215" stroke-linecap="round" stroke-dasharray="0.6 2.4 1.0 1.9 0.5 3.1" stroke-dashoffset="4.8"/>
<path d="M253.0 343.0C252.0 346.4 249.4 356.8 247.2 363.2C244.9 369.7 240.9 378.7 239.6 381.7" fill="none" stroke="#e6ae38" stroke-width="1.15" stroke-linecap="round" />
<path d="M253.0 343.0C252.0 346.4 249.4 356.8 247.2 363.2C244.9 369.7 240.9 378.7 239.6 381.7" fill="none" stroke="#b8821e" stroke-width="1.035" stroke-linecap="round" stroke-dasharray="0.6 2.4 1.0 1.9 0.5 3.1" stroke-dashoffset="2.7"/>
<path d="M257.0 347.0C255.8 350.3 252.0 361.0 249.6 366.9C247.1 372.7 243.4 379.6 242.1 382.1" fill="none" stroke="#92c6a6" stroke-width="1.35" stroke-linecap="round" />
<path d="M257.0 347.0C255.8 350.3 252.0 361.0 249.6 366.9C247.1 372.7 243.4 379.6 242.1 382.1" fill="none" stroke="#4f9070" stroke-width="1.215" stroke-linecap="round" stroke-dasharray="0.6 2.4 1.0 1.9 0.5 3.1" stroke-dashoffset="1.8"/>
<path d="M250.0 376.0C249.4 376.7 247.4 379.4 246.1 380.5C244.9 381.6 243.1 382.1 242.6 382.4" fill="none" stroke="#acdcc0" stroke-width="1.35" stroke-linecap="round" />
<path d="M250.0 376.0C249.4 376.7 247.4 379.4 246.1 380.5C244.9 381.6 243.1 382.1 242.6 382.4" fill="none" stroke="#4f9070" stroke-width="1.215" stroke-linecap="round" stroke-dasharray="0.6 2.4 1.0 1.9 0.5 3.1" stroke-dashoffset="4.6"/>
<path d="M229.0 345.0C229.5 348.1 230.6 357.4 232.0 363.4C233.3 369.4 236.3 378.2 237.1 381.2" fill="none" stroke="#e6ae38" stroke-width="1.15" stroke-linecap="round" />
<path d="M229.0 345.0C229.5 348.1 230.6 357.4 232.0 363.4C233.3 369.4 236.3 378.2 237.1 381.2" fill="none" stroke="#b8821e" stroke-width="1.035" stroke-linecap="round" stroke-dasharray="0.6 2.4 1.0 1.9 0.5 3.1" stroke-dashoffset="3.5"/>
<path d="M220.0 352.0C220.9 354.9 223.2 364.7 225.3 369.7C227.3 374.7 231.2 380.0 232.4 382.1" fill="none" stroke="#92c6a6" stroke-width="1.35" stroke-linecap="round" />
<path d="M220.0 352.0C220.9 354.9 223.2 364.7 225.3 369.7C227.3 374.7 231.2 380.0 232.4 382.1" fill="none" stroke="#4f9070" stroke-width="1.215" stroke-linecap="round" stroke-dasharray="0.6 2.4 1.0 1.9 0.5 3.1" stroke-dashoffset="1.5"/>
<path d="M253.0 327.5C254.4 330.1 258.3 338.2 261.2 342.9C264.1 347.6 268.9 353.4 270.4 355.5" fill="none" stroke="#e6ae38" stroke-width="1.15" stroke-linecap="round" />
<path d="M253.0 327.5C254.4 330.1 258.3 338.2 261.2 342.9C264.1 347.6 268.9 353.4 270.4 355.5" fill="none" stroke="#b8821e" stroke-width="1.035" stroke-linecap="round" stroke-dasharray="0.6 2.4 1.0 1.9 0.5 3.1" stroke-dashoffset="3.1"/>
<path d="M256.0 322.0C257.4 324.7 262.1 332.6 264.5 337.9C266.8 343.2 269.2 351.1 270.2 353.8" fill="none" stroke="#92c6a6" stroke-width="1.35" stroke-linecap="round" />
<path d="M256.0 322.0C257.4 324.7 262.1 332.6 264.5 337.9C266.8 343.2 269.2 351.1 270.2 353.8" fill="none" stroke="#4f9070" stroke-width="1.215" stroke-linecap="round" stroke-dasharray="0.6 2.4 1.0 1.9 0.5 3.1" stroke-dashoffset="1.2"/>
<path d="M260.0 318.0C261.5 321.3 266.6 331.4 269.2 337.7C271.8 344.0 274.7 352.6 275.7 355.6" fill="none" stroke="#acdcc0" stroke-width="1.35" stroke-linecap="round" />
<path d="M260.0 318.0C261.5 321.3 266.6 331.4 269.2 337.7C271.8 344.0 274.7 352.6 275.7 355.6" fill="none" stroke="#4f9070" stroke-width="1.215" stroke-linecap="round" stroke-dasharray="0.6 2.4 1.0 1.9 0.5 3.1" stroke-dashoffset="3.2"/>
<path d="M264.0 315.0C264.9 318.6 268.3 329.9 269.7 336.8C271.1 343.7 271.9 353.2 272.4 356.4" fill="none" stroke="#e6ae38" stroke-width="1.15" stroke-linecap="round" />
<path d="M264.0 315.0C264.9 318.6 268.3 329.9 269.7 336.8C271.1 343.7 271.9 353.2 272.4 356.4" fill="none" stroke="#b8821e" stroke-width="1.035" stroke-linecap="round" stroke-dasharray="0.6 2.4 1.0 1.9 0.5 3.1" stroke-dashoffset="3.7"/>
<path d="M268.0 313.0C268.8 316.7 271.7 328.3 273.0 335.2C274.3 342.2 275.4 351.4 275.9 354.7" fill="none" stroke="#92c6a6" stroke-width="1.35" stroke-linecap="round" />
<path d="M268.0 313.0C268.8 316.7 271.7 328.3 273.0 335.2C274.3 342.2 275.4 351.4 275.9 354.7" fill="none" stroke="#4f9070" stroke-width="1.215" stroke-linecap="round" stroke-dasharray="0.6 2.4 1.0 1.9 0.5 3.1" stroke-dashoffset="1.5"/>
<path d="M272.0 312.0C272.1 316.1 272.4 329.1 272.7 336.7C272.9 344.4 273.4 354.2 273.6 357.7" fill="none" stroke="#acdcc0" stroke-width="1.35" stroke-linecap="round" />
<path d="M272.0 312.0C272.1 316.1 272.4 329.1 272.7 336.7C272.9 344.4 273.4 354.2 273.6 357.7" fill="none" stroke="#4f9070" stroke-width="1.215" stroke-linecap="round" stroke-dasharray="0.6 2.4 1.0 1.9 0.5 3.1" stroke-dashoffset="4.4"/>
<path d="M276.0 312.0C276.1 316.2 276.2 329.6 276.5 337.3C276.8 345.0 277.6 354.7 277.9 358.2" fill="none" stroke="#e6ae38" stroke-width="1.15" stroke-linecap="round" />
<path d="M276.0 312.0C276.1 316.2 276.2 329.6 276.5 337.3C276.8 345.0 277.6 354.7 277.9 358.2" fill="none" stroke="#b8821e" stroke-width="1.035" stroke-linecap="round" stroke-dasharray="0.6 2.4 1.0 1.9 0.5 3.1" stroke-dashoffset="2.2"/>
<path d="M281.0 313.5C280.7 317.1 279.1 327.8 278.9 335.2C278.8 342.6 279.9 354.1 280.1 357.8" fill="none" stroke="#92c6a6" stroke-width="1.35" stroke-linecap="round" />
<path d="M281.0 313.5C280.7 317.1 279.1 327.8 278.9 335.2C278.8 342.6 279.9 354.1 280.1 357.8" fill="none" stroke="#4f9070" stroke-width="1.215" stroke-linecap="round" stroke-dasharray="0.6 2.4 1.0 1.9 0.5 3.1" stroke-dashoffset="1.1"/>
<path d="M285.0 312.0C284.8 315.7 284.2 326.9 283.6 334.2C282.9 341.6 281.5 352.4 281.1 356.0" fill="none" stroke="#acdcc0" stroke-width="1.35" stroke-linecap="round" />
<path d="M285.0 312.0C284.8 315.7 284.2 326.9 283.6 334.2C282.9 341.6 281.5 352.4 281.1 356.0" fill="none" stroke="#4f9070" stroke-width="1.215" stroke-linecap="round" stroke-dasharray="0.6 2.4 1.0 1.9 0.5 3.1" stroke-dashoffset="2.5"/>
<path d="M288.0 311.0C287.3 314.9 285.3 327.2 283.8 334.6C282.2 342.0 279.7 352.1 278.8 355.6" fill="none" stroke="#e6ae38" stroke-width="1.15" stroke-linecap="round" />
<path d="M288.0 311.0C287.3 314.9 285.3 327.2 283.8 334.6C282.2 342.0 279.7 352.1 278.8 355.6" fill="none" stroke="#b8821e" stroke-width="1.035" stroke-linecap="round" stroke-dasharray="0.6 2.4 1.0 1.9 0.5 3.1" stroke-dashoffset="4.5"/>
<path d="M292.0 320.0C291.3 323.6 289.8 335.4 288.0 341.6C286.2 347.9 282.3 354.7 281.2 357.4" fill="none" stroke="#92c6a6" stroke-width="1.35" stroke-linecap="round" />
<path d="M292.0 320.0C291.3 323.6 289.8 335.4 288.0 341.6C286.2 347.9 282.3 354.7 281.2 357.4" fill="none" stroke="#4f9070" stroke-width="1.215" stroke-linecap="round" stroke-dasharray="0.6 2.4 1.0 1.9 0.5 3.1" stroke-dashoffset="3.4"/>
<path d="M295.0 331.0C294.0 333.6 291.6 342.3 289.0 346.6C286.4 350.9 280.9 355.2 279.3 356.9" fill="none" stroke="#acdcc0" stroke-width="1.35" stroke-linecap="round" />
<path d="M295.0 331.0C294.0 333.6 291.6 342.3 289.0 346.6C286.4 350.9 280.9 355.2 279.3 356.9" fill="none" stroke="#4f9070" stroke-width="1.215" stroke-linecap="round" stroke-dasharray="0.6 2.4 1.0 1.9 0.5 3.1" stroke-dashoffset="2.8"/>
<path d="M290.0 338.0C289.5 339.6 288.3 344.9 286.8 347.8C285.3 350.6 281.9 353.8 280.9 355.0" fill="none" stroke="#e6ae38" stroke-width="1.15" stroke-linecap="round" />
<path d="M290.0 338.0C289.5 339.6 288.3 344.9 286.8 347.8C285.3 350.6 281.9 353.8 280.9 355.0" fill="none" stroke="#b8821e" stroke-width="1.035" stroke-linecap="round" stroke-dasharray="0.6 2.4 1.0 1.9 0.5 3.1" stroke-dashoffset="1.4"/>
<path d="M258.0 335.0C259.4 336.7 264.2 341.6 266.3 345.3C268.4 348.9 269.9 354.9 270.6 356.8" fill="none" stroke="#92c6a6" stroke-width="1.35" stroke-linecap="round" />
<path d="M258.0 335.0C259.4 336.7 264.2 341.6 266.3 345.3C268.4 348.9 269.9 354.9 270.6 356.8" fill="none" stroke="#4f9070" stroke-width="1.215" stroke-linecap="round" stroke-dasharray="0.6 2.4 1.0 1.9 0.5 3.1" stroke-dashoffset="4.0"/>
<path d="M266.0 330.0C266.5 332.4 267.9 340.4 269.2 344.5C270.6 348.7 273.3 353.1 274.1 354.9" fill="none" stroke="#acdcc0" stroke-width="1.35" stroke-linecap="round" />
<path d="M266.0 330.0C266.5 332.4 267.9 340.4 269.2 344.5C270.6 348.7 273.3 353.1 274.1 354.9" fill="none" stroke="#4f9070" stroke-width="1.215" stroke-linecap="round" stroke-dasharray="0.6 2.4 1.0 1.9 0.5 3.1" stroke-dashoffset="4.4"/>
<path d="M162 311 L167 312.6 L173.7 314" fill="none" stroke="#4f9070" stroke-width="0.9" stroke-linecap="round" stroke-dasharray="1.5 1"/>
<path d="M139 346 L146 346.6 L153 348.4" fill="none" stroke="#4f9070" stroke-width="0.9" stroke-linecap="round" stroke-dasharray="1.5 1"/>
<path d="M276 286 L284 285.6" fill="none" stroke="#4f9070" stroke-width="0.9" stroke-linecap="round" stroke-dasharray="1.5 1"/>
</svg></div>
<div id="stats"></div>
<div class="hl" style="left:428px;top:59px;width:170px"></div>
<div class="hl" style="left:428px;top:185px;width:170px"></div>
<svg style="position:absolute;left:0;top:0" width="600" height="424" viewBox="0 0 600 424"><rect x="449.1" y="204.6" width="5.1" height="4.9" fill="#f08a10" stroke="rgba(0,0,0,0.22)" stroke-width="0.5"/><rect x="449.1" y="213.6" width="5.1" height="4.9" fill="#5f8c76" stroke="rgba(0,0,0,0.22)" stroke-width="0.5"/><rect x="449.1" y="222.6" width="5.1" height="4.9" fill="#5a2a2a" stroke="rgba(0,0,0,0.22)" stroke-width="0.5"/><rect x="449.1" y="231.6" width="5.1" height="4.9" fill="#a87878" stroke="rgba(0,0,0,0.22)" stroke-width="0.5"/><rect x="449.1" y="240.6" width="5.1" height="4.9" fill="#c8b4d4" stroke="rgba(0,0,0,0.22)" stroke-width="0.5"/><rect x="449.1" y="249.6" width="5.1" height="4.9" fill="#1c1c1c" stroke="rgba(0,0,0,0.22)" stroke-width="0.5"/><rect x="449.1" y="258.6" width="5.1" height="4.9" fill="#1c4a80" stroke="rgba(0,0,0,0.22)" stroke-width="0.5"/><rect x="449.1" y="267.6" width="5.1" height="4.9" fill="#f08a10" stroke="rgba(0,0,0,0.22)" stroke-width="0.5"/></svg>
<div class="hl" style="left:428px;top:275px;width:170px;background:#d6d6d6"></div>
<div class="hl" style="left:3px;top:412px;width:595px;background:#c4c4c4"></div>
<div class="t " style="left:3px;top:43px;">Design:</div>
<div class="t " style="left:37px;top:43px;">STORK 5</div>
<div class="t " style="left:3px;top:52px;">Colorway:</div>
<div class="t " style="left:37px;top:52px;">Colorway 1</div>
<div class="t " style="left:548px;top:4px;">Stitches:</div>
<div class="t " style="left:576px;top:4px;">11828</div>
<div class="t " style="left:548px;top:13px;">Colors:</div>
<div class="t " style="left:576px;top:13px;">7</div>
<div class="t " style="left:548px;top:22px;">Height:</div>
<div class="t " style="left:576px;top:22px;">5.80 in</div>
<div class="t " style="left:548px;top:31px;">Width:</div>
<div class="t " style="left:576px;top:31px;">3.18 in</div>
<div class="t " style="left:548px;top:40px;">Zoom:</div>
<div class="t " style="left:576px;top:40px;">1:1</div>
<div class="t " style="left:429px;top:60px;">Machine:</div>
<div class="t " style="left:477px;top:60px;">Tajima</div>
<div class="t " style="left:429px;top:69px;">Color changes:</div>
<div class="t " style="left:477px;top:69px;">7</div>
<div class="t " style="left:429px;top:78px;">Stops:</div>
<div class="t " style="left:477px;top:78px;">8</div>
<div class="t " style="left:429px;top:87px;">Trims:</div>
<div class="t " style="left:477px;top:87px;">21</div>
<div class="t " style="left:429px;top:96px;">Left:</div>
<div class="t " style="left:477px;top:96px;">40.4 mm</div>
<div class="t " style="left:429px;top:105px;">Right:</div>
<div class="t " style="left:477px;top:105px;">40.4 mm</div>
<div class="t " style="left:429px;top:114px;">Up:</div>
<div class="t " style="left:477px;top:114px;">73.6 mm</div>
<div class="t " style="left:429px;top:123px;">Down:</div>
<div class="t " style="left:477px;top:123px;">73.6 mm</div>
<div class="t " style="left:429px;top:132px;">EndX:</div>
<div class="t " style="left:477px;top:132px;">0.00 in</div>
<div class="t " style="left:429px;top:141px;">EndY:</div>
<div class="t " style="left:477px;top:141px;">0.00 in</div>
<div class="t " style="left:429px;top:150px;">Max Stitch:</div>
<div class="t " style="left:477px;top:150px;">7.4 mm</div>
<div class="t " style="left:429px;top:159px;">Min Stitch:</div>
<div class="t " style="left:477px;top:159px;">0.3 mm</div>
<div class="t " style="left:429px;top:168px;">Max Jump:</div>
<div class="t " style="left:477px;top:168px;">7.1 mm</div>
<div class="t " style="left:429px;top:177px;">Total Bobbin:</div>
<div class="t " style="left:477px;top:177px;">95.77ft</div>
<div class="t " style="left:429px;top:187px;">Stop Sequence:</div>
<div class="t b" style="left:429px;top:196px;">#</div>
<div class="t b" style="left:438px;top:196px;">N#</div>
<div class="t r b" style="right:129px;top:196px;">St.</div>
<div class="t b" style="left:474px;top:196px;">Description</div>
<div class="t r b" style="right:63.5px;top:196px;">Code</div>
<div class="t b" style="left:540px;top:196px;">Brand</div>
<div class="t " style="left:429px;top:205px;">1.</div>
<div class="t " style="left:438px;top:205px;">3</div>
<div class="t r " style="right:129px;top:205px;">1146</div>
<div class="t r " style="right:63.5px;top:205px;">1137</div>
<div class="t " style="left:540px;top:205px;">Madeira Classic 40</div>
<div class="t " style="left:429px;top:214px;">2.</div>
<div class="t " style="left:438px;top:214px;">7</div>
<div class="t r " style="right:129px;top:214px;">1694</div>
<div class="t r " style="right:63.5px;top:214px;">1098</div>
<div class="t " style="left:540px;top:214px;">Madeira Classic 40</div>
<div class="t " style="left:429px;top:223px;">3.</div>
<div class="t " style="left:438px;top:223px;">1</div>
<div class="t r " style="right:129px;top:223px;">1423</div>
<div class="t r " style="right:63.5px;top:223px;">1036</div>
<div class="t " style="left:540px;top:223px;">Madeira Classic 40</div>
<div class="t " style="left:429px;top:232px;">4.</div>
<div class="t " style="left:438px;top:232px;">2</div>
<div class="t r " style="right:129px;top:232px;">1370</div>
<div class="t r " style="right:63.5px;top:232px;">1141</div>
<div class="t " style="left:540px;top:232px;">Madeira Classic 40</div>
<div class="t " style="left:429px;top:241px;">5.</div>
<div class="t " style="left:438px;top:241px;">4</div>
<div class="t r " style="right:129px;top:241px;">970</div>
<div class="t r " style="right:63.5px;top:241px;">1111</div>
<div class="t " style="left:540px;top:241px;">Madeira Classic 40</div>
<div class="t " style="left:429px;top:250px;">6.</div>
<div class="t " style="left:438px;top:250px;">5</div>
<div class="t r " style="right:129px;top:250px;">3274</div>
<div class="t " style="left:474px;top:250px;">Emerald Black</div>
<div class="t r " style="right:63.5px;top:250px;">1000</div>
<div class="t " style="left:540px;top:250px;">Madeira Classic 40</div>
<div class="t " style="left:429px;top:259px;">7.</div>
<div class="t " style="left:438px;top:259px;">6</div>
<div class="t r " style="right:129px;top:259px;">1912</div>
<div class="t r " style="right:63.5px;top:259px;">1042</div>
<div class="t " style="left:540px;top:259px;">Madeira Classic 40</div>
<div class="t " style="left:429px;top:268px;">8.</div>
<div class="t " style="left:438px;top:268px;">3</div>
<div class="t r " style="right:129px;top:268px;">37</div>
<div class="t r " style="right:63.5px;top:268px;">1137</div>
<div class="t " style="left:540px;top:268px;">Madeira Classic 40</div>
<div class="t f" style="left:3px;top:414px;">Created By:</div>
<div class="t f" style="left:150px;top:414px;">Last Saved: 04/03/2023 01:56:35</div>
<div class="t f" style="left:356px;top:414px;">Printed: 04/03/2023 01:56:39</div>
<div class="t r f" style="right:4.7000000000000455px;top:414px;">Page 1 of 1</div>
</body>
</html>
